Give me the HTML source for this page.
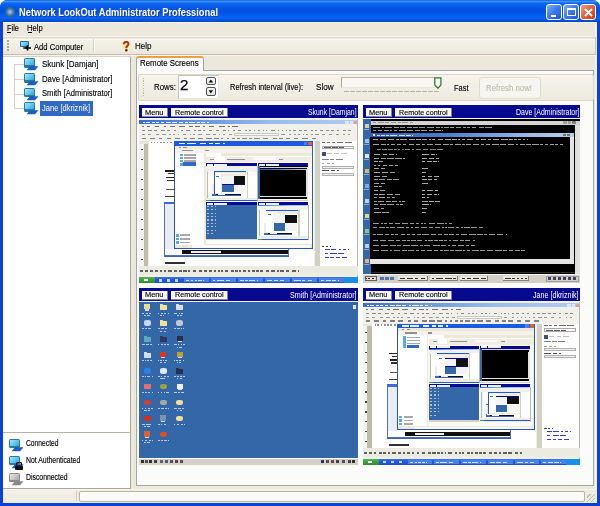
<!DOCTYPE html>
<html><head><meta charset="utf-8"><style>
*{margin:0;padding:0;box-sizing:border-box}
html,body{width:600px;height:506px;overflow:hidden;background:#ffffff}
body{font-family:"Liberation Sans",sans-serif;font-size:8px;color:#000;position:relative}
div,span,svg{position:absolute}
.t{white-space:nowrap;line-height:1;transform-origin:0 0}
</style></head><body>
<div style="left:0px;top:0px;width:600px;height:506px;background:#0842d8;border-radius:8px 8px 0 0"></div>
<div style="left:0px;top:0px;width:600px;height:22px;background:linear-gradient(#1060e0 0px,#3a94ff 1.5px,#1068f0 3px,#0558e8 7px,#0050e0 12px,#0860f2 16px,#0a64f4 18px,#0452d8 20.5px,#0040c0 22px);border-radius:7px 7px 0 0"></div>
<div style="left:5px;top:6.5px;width:10px;height:10px;border-radius:5px;background:radial-gradient(circle at 50% 50%,#b0d0ff 0,#7090d8 30%,#2a6a78 60%,#508a40 80%,#c0d8a0 100%)"></div>
<div class="t" style="left:18.69px;top:7.58px;font-size:10.17px;color:#fff;font-weight:bold;transform:scaleX(0.915);text-shadow:1px 1px 0 #1a3aa0">Network LookOut Administrator Professional</div>
<div style="left:546px;top:4px;width:16px;height:16px;border:1px solid #fff;border-radius:3px;background:linear-gradient(135deg,#7eb0ff,#3a78f0 50%,#1c55d8)"><div style="left:4px;top:10px;width:5px;height:2px;background:#fff"></div></div>
<div style="left:563px;top:4px;width:16px;height:16px;border:1px solid #fff;border-radius:3px;background:linear-gradient(135deg,#7eb0ff,#3a78f0 50%,#1c55d8)"><div style="left:3px;top:3px;width:9px;height:8px;border:1px solid #fff;border-top-width:2px"></div></div>
<div style="left:580px;top:4px;width:16px;height:16px;border:1px solid #fff;border-radius:3px;background:linear-gradient(135deg,#f0a080,#e06040 50%,#c0401a)"><svg style="left:3px;top:3px" width="9" height="9"><path d="M1 1L8 8M8 1L1 8" stroke="#fff" stroke-width="1.8"/></svg></div>
<div style="left:3px;top:22px;width:594px;height:481px;background:#ede8dc;"></div>
<div style="left:3px;top:22px;width:594px;height:1px;background:#f4f6e8;"></div>
<div style="left:595px;top:22px;width:1.5px;height:480px;background:#f4f3ee;"></div>
<div class="t" style="left:6.73px;top:24.22px;font-size:9.30px;color:#000;font-weight:normal;transform:scaleX(0.801);-webkit-text-stroke:0.15px #000;">File</div>
<div style="left:7.2px;top:32.3px;width:3.5px;height:0.8px;background:#000;"></div>
<div class="t" style="left:27.33px;top:24.22px;font-size:9.30px;color:#000;font-weight:normal;transform:scaleX(0.816);-webkit-text-stroke:0.15px #000;">Help</div>
<div style="left:27.8px;top:32.3px;width:4.5px;height:0.8px;background:#000;"></div>
<div style="left:3px;top:35.5px;width:593px;height:1px;background:#f6f4ec;"></div>
<div style="left:3px;top:36.8px;width:593px;height:1.2px;background:#dedacc;"></div>
<div style="left:3px;top:38.6px;width:592px;height:1px;background:#fbfaf4;"></div>
<div style="left:3px;top:39.5px;width:592px;height:14.5px;background:linear-gradient(#f3f2e6,#f0eee2 50%,#ebe6dc);"></div>
<div style="left:594.5px;top:37px;width:1px;height:17px;background:#c8c4b4;"></div>
<div style="left:3px;top:54px;width:593px;height:1px;background:#c4bcb0;"></div>
<div style="left:3px;top:55px;width:593px;height:1px;background:#f8f4ec;"></div>
<div style="left:7px;top:40px;width:2px;height:12px;background:repeating-linear-gradient(#b0ac98 0 1.5px,transparent 1.5px 3px);"></div>
<div style="left:20.3px;top:41px;width:8.4px;height:6px;background:#2a6a88;border-radius:1px"></div>
<div style="left:21.4px;top:42px;width:6.2px;height:4px;background:linear-gradient(135deg,#a8e8ff,#30b0e8);"></div>
<div style="left:22.5px;top:47px;width:4px;height:1.6px;background:#5a8aa0;"></div>
<svg style="left:23.8px;top:45.3px" width="7.5" height="6"><path d="M3.5 0.3V5.6M0.5 3H7.2" stroke="#000" stroke-width="1.7"/></svg>
<div class="t" style="left:34.23px;top:42.72px;font-size:9.30px;color:#000;font-weight:normal;transform:scaleX(0.821);-webkit-text-stroke:0.15px #000;">Add Computer</div>
<div style="left:92.5px;top:39px;width:1px;height:13px;background:#d8d4c0;"></div>
<div style="left:93.5px;top:39px;width:1px;height:13px;background:#ffffff;"></div>
<div style="left:120px;top:40px;width:11px;height:12px;border-radius:6px;background:radial-gradient(circle,rgba(255,230,120,.8) 0,rgba(255,240,180,.4) 50%,transparent 70%)"></div>
<svg style="left:122px;top:41px" width="8" height="11"><path d="M1.8 3.2C1.8 1.5 3 0.9 4.2 0.9C5.6 0.9 6.5 1.8 6.5 3C6.5 4.6 4.4 4.8 4.3 6.6V7.2" stroke="#b83008" stroke-width="2" fill="none"/><circle cx="4.3" cy="9.3" r="1.2" fill="#502000"/></svg>
<div class="t" style="left:134.53px;top:42.42px;font-size:9.30px;color:#000;font-weight:normal;transform:scaleX(0.860);-webkit-text-stroke:0.15px #000;">Help</div>
<div style="left:3px;top:56px;width:128px;height:432px;background:#fff;"></div>
<div style="left:130px;top:56px;width:1px;height:432px;background:#aca899;"></div>
<div style="left:3px;top:56px;width:128px;height:1px;background:#d8d4c4;"></div>
<div style="left:3px;top:432px;width:128px;height:1px;background:#b8b4a4;"></div>
<div style="left:3px;top:488px;width:128px;height:1px;background:#aca899;"></div>
<div style="left:14px;top:64px;width:1px;height:45px;background:#d8cccc;"></div>
<div style="left:14px;top:64px;width:10px;height:1px;background:#d8cccc;"></div>
<div style="left:24.2px;top:58px;width:11px;height:9.5px;background:#2a7a98;border-radius:1.5px"></div>
<div style="left:25.4px;top:59px;width:8.6px;height:6px;background:linear-gradient(135deg,#a0eaff,#30a8e0)"></div>
<svg style="left:26.2px;top:66px" width="13" height="5"><path d="M4 0.3H12.5L9 4.3H0.5Z" fill="#1a5cc8"/></svg>
<div class="t" style="left:41.51px;top:58.53px;font-size:9.88px;color:#000;font-weight:normal;transform:scaleX(0.811);-webkit-text-stroke:0.15px #000;">Skunk [Damjan]</div>
<div style="left:14px;top:79px;width:10px;height:1px;background:#d8cccc;"></div>
<div style="left:24.2px;top:73px;width:11px;height:9.5px;background:#2a7a98;border-radius:1.5px"></div>
<div style="left:25.4px;top:74px;width:8.6px;height:6px;background:linear-gradient(135deg,#a0eaff,#30a8e0)"></div>
<svg style="left:26.2px;top:81px" width="13" height="5"><path d="M4 0.3H12.5L9 4.3H0.5Z" fill="#1a5cc8"/></svg>
<div class="t" style="left:41.51px;top:73.53px;font-size:9.88px;color:#000;font-weight:normal;transform:scaleX(0.788);-webkit-text-stroke:0.15px #000;">Dave [Administrator]</div>
<div style="left:14px;top:93.5px;width:10px;height:1px;background:#d8cccc;"></div>
<div style="left:24.2px;top:87.5px;width:11px;height:9.5px;background:#2a7a98;border-radius:1.5px"></div>
<div style="left:25.4px;top:88.5px;width:8.6px;height:6px;background:linear-gradient(135deg,#a0eaff,#30a8e0)"></div>
<svg style="left:26.2px;top:95.5px" width="13" height="5"><path d="M4 0.3H12.5L9 4.3H0.5Z" fill="#1a5cc8"/></svg>
<div class="t" style="left:41.51px;top:88.03px;font-size:9.88px;color:#000;font-weight:normal;transform:scaleX(0.769);-webkit-text-stroke:0.15px #000;">Smith [Administrator]</div>
<div style="left:14px;top:108px;width:10px;height:1px;background:#d8cccc;"></div>
<div style="left:24.2px;top:102px;width:11px;height:9.5px;background:#2a7a98;border-radius:1.5px"></div>
<div style="left:25.4px;top:103px;width:8.6px;height:6px;background:linear-gradient(135deg,#a0eaff,#30a8e0)"></div>
<svg style="left:26.2px;top:110px" width="13" height="5"><path d="M4 0.3H12.5L9 4.3H0.5Z" fill="#1a5cc8"/></svg>
<div style="left:40.4px;top:101.3px;width:52.2px;height:14.5px;background:#316ac5;"></div>
<div class="t" style="left:41.51px;top:103.33px;font-size:9.88px;color:#fff;font-weight:normal;transform:scaleX(0.762);">Jane [dkriznik]</div>
<div style="left:9.2px;top:438.5px;width:11px;height:9.5px;background:#2a7a98;border-radius:1.5px"></div>
<div style="left:10.399999999999999px;top:439.5px;width:8.6px;height:6px;background:linear-gradient(135deg,#a0eaff,#30a8e0)"></div>
<svg style="left:11.2px;top:446.5px" width="13" height="5"><path d="M4 0.3H12.5L9 4.3H0.5Z" fill="#1a5cc8"/></svg>
<div class="t" style="left:26.37px;top:438.74px;font-size:8.58px;color:#000;font-weight:normal;transform:scaleX(0.783);-webkit-text-stroke:0.15px #000;">Connected</div>
<div style="left:9.2px;top:455.5px;width:11px;height:9.5px;background:#2a7a98;border-radius:1.5px"></div>
<div style="left:10.399999999999999px;top:456.5px;width:8.6px;height:6px;background:linear-gradient(135deg,#a0eaff,#30a8e0)"></div>
<svg style="left:11.2px;top:463.5px" width="13" height="5"><path d="M4 0.3H12.5L9 4.3H0.5Z" fill="#1a5cc8"/></svg>
<svg style="left:14.2px;top:461.5px" width="10" height="8"><path d="M2.5 3.5V2.2A2.5 2 0 0 1 7.5 2.2V3.5" stroke="#000" stroke-width="1.2" fill="none"/><rect x="1" y="3.5" width="8" height="4.5" rx="1" fill="#101010"/></svg>
<div class="t" style="left:26.37px;top:455.94px;font-size:8.58px;color:#000;font-weight:normal;transform:scaleX(0.801);-webkit-text-stroke:0.15px #000;">Not Authenticated</div>
<div style="left:9.2px;top:472.5px;width:11px;height:9.5px;background:#888888;border-radius:1.5px"></div>
<div style="left:10.399999999999999px;top:473.5px;width:8.6px;height:6px;background:linear-gradient(135deg,#e8e8e8,#a8a8a8)"></div>
<svg style="left:11.2px;top:480.5px" width="13" height="5"><path d="M4 0.3H12.5L9 4.3H0.5Z" fill="#888888"/></svg>
<div class="t" style="left:26.37px;top:473.24px;font-size:8.58px;color:#000;font-weight:normal;transform:scaleX(0.799);-webkit-text-stroke:0.15px #000;">Disconnected</div>
<div style="left:3px;top:489px;width:593px;height:14px;background:#eeebe0;"></div>
<div style="left:3px;top:489px;width:593px;height:1px;background:#f8f6ee;"></div>
<div style="left:4px;top:490px;width:72px;height:12px;background:linear-gradient(#f2f0e8,#eeece0);"></div>
<div style="left:76px;top:491px;width:1px;height:10px;background:#d0ccb8;"></div>
<div style="left:79px;top:491px;width:506px;height:11px;background:#fbfaf6;border:1px solid #b9b5a2;border-radius:2px"></div>
<div style="left:587px;top:494px;width:8px;height:8px;background:repeating-linear-gradient(135deg,transparent 0 2px,#c0bca8 2px 3px);"></div>
<div style="left:135.8px;top:70px;width:458.5px;height:416px;background:#fbfbf9;border:1px solid #a0a8a8"></div>
<div style="left:135.8px;top:56px;width:68.5px;height:15px;background:#fcfcfe;border:1px solid #a0a8a8;border-bottom:none;border-top:2px solid #eaa040;border-radius:3px 3px 0 0"></div>
<div class="t" style="left:140.31px;top:57.55px;font-size:9.74px;color:#000;font-weight:normal;transform:scaleX(0.809);-webkit-text-stroke:0.15px #000;">Remote Screens</div>
<div style="left:137.8px;top:73.8px;width:456.5px;height:27px;background:linear-gradient(#f6f4ec,#edeadf);border:1px solid #dcd8c8;border-radius:2px"></div>
<div style="left:142.5px;top:77.5px;width:1.5px;height:19px;background:repeating-linear-gradient(#b8b4a0 0 1.2px,transparent 1.2px 2.4px);"></div>
<div class="t" style="left:153.51px;top:82.03px;font-size:9.88px;color:#000;font-weight:normal;transform:scaleX(0.799);-webkit-text-stroke:0.15px #000;">Rows:</div>
<div style="left:178px;top:74.5px;width:40.5px;height:24.7px;background:#fff;border:1px solid #c8c4b8;border-right-color:#e8e6e0;border-bottom-color:#e8e6e0"></div>
<div class="t" style="left:180.00px;top:78.78px;font-size:13.95px;color:#000;font-weight:normal;transform:scaleX(1.085);-webkit-text-stroke:0.25px #000">2</div>
<div style="left:206.3px;top:77.3px;width:9.7px;height:7.8px;background:linear-gradient(#f8f8f8,#e4e6ea);border:1.3px solid #485048;border-radius:2px"></div>
<svg style="left:206.3px;top:77.3px" width="10" height="8.8"><path d="M2.6 5.500000000000005L4.85 2.5000000000000058L7.1 5.500000000000005Z" fill="#000"/></svg>
<div style="left:206.3px;top:86.7px;width:9.7px;height:9.7px;background:linear-gradient(#f8f8f8,#e4e6ea);border:1.3px solid #485048;border-radius:2px"></div>
<svg style="left:206.3px;top:86.7px" width="10" height="10.7"><path d="M2.6 3.2499999999999942L4.85 6.449999999999994L7.1 3.2499999999999942Z" fill="#000"/></svg>
<div class="t" style="left:230.12px;top:82.37px;font-size:9.59px;color:#000;font-weight:normal;transform:scaleX(0.784);-webkit-text-stroke:0.15px #000;">Refresh interval (live):</div>
<div class="t" style="left:315.52px;top:82.37px;font-size:9.59px;color:#000;font-weight:normal;transform:scaleX(0.850);-webkit-text-stroke:0.15px #000;">Slow</div>
<div style="left:341px;top:76.5px;width:100px;height:11.5px;background:#faf7f4;border-left:1.2px solid #a8a898;border-top:1.2px solid #b8b8a8;border-right:0.6px solid #e8e6dc;border-bottom:0.6px solid #e8e6dc;border-radius:1px"></div>
<div style="left:344px;top:91.3px;width:96px;height:1.2px;background:repeating-linear-gradient(90deg,#b4b2a2 0 5px,transparent 5px 6px);"></div>
<svg style="left:434px;top:77px" width="8" height="12"><path d="M0.8 0.8H6.9V8L3.9 11.2L0.8 8Z" fill="#fafaf6" stroke="#387838" stroke-width="1.3"/></svg>
<div class="t" style="left:454.31px;top:82.53px;font-size:9.88px;color:#000;font-weight:normal;transform:scaleX(0.760);-webkit-text-stroke:0.15px #000;">Fast</div>
<div style="left:478.6px;top:76.5px;width:62px;height:22px;background:#f6f5f0;border:1px solid #e0dccc;border-radius:3px"></div>
<div class="t" style="left:486.41px;top:83.03px;font-size:9.88px;color:#b4b2a4;font-weight:normal;transform:scaleX(0.791);">Refresh now!</div>
<div style="left:139px;top:105.3px;width:219px;height:13px;background:#07098e;"></div>
<div style="left:141.8px;top:107.89999999999999px;width:25.9px;height:9.6px;background:#f8f8fa;border-right:1px solid #8080a0;border-bottom:1px solid #8080a0"></div>
<div class="t" style="left:145.31px;top:108.55px;font-size:7.85px;color:#000;font-weight:normal;transform:scaleX(0.939);-webkit-text-stroke:0.15px #000">Menu</div>
<div style="left:171px;top:107.89999999999999px;width:56.7px;height:9.6px;background:#f8f8fa;border-right:1px solid #8080a0;border-bottom:1px solid #8080a0"></div>
<div class="t" style="left:175.11px;top:108.55px;font-size:7.85px;color:#000;font-weight:normal;transform:scaleX(0.915);-webkit-text-stroke:0.15px #000">Remote control</div>
<div class="t" style="left:308.18px;top:108.26px;font-size:8.43px;color:#fff;font-weight:normal;transform:scaleX(0.817);">Skunk [Damjan]</div>
<div style="left:139px;top:118.3px;width:219px;height:1px;background:#f8f8fc;"></div>
<div style="left:363px;top:105.3px;width:217px;height:13px;background:#07098e;"></div>
<div style="left:365.8px;top:107.89999999999999px;width:25.9px;height:9.6px;background:#f8f8fa;border-right:1px solid #8080a0;border-bottom:1px solid #8080a0"></div>
<div class="t" style="left:369.31px;top:108.55px;font-size:7.85px;color:#000;font-weight:normal;transform:scaleX(0.939);-webkit-text-stroke:0.15px #000">Menu</div>
<div style="left:395px;top:107.89999999999999px;width:56.7px;height:9.6px;background:#f8f8fa;border-right:1px solid #8080a0;border-bottom:1px solid #8080a0"></div>
<div class="t" style="left:399.11px;top:108.55px;font-size:7.85px;color:#000;font-weight:normal;transform:scaleX(0.915);-webkit-text-stroke:0.15px #000">Remote control</div>
<div class="t" style="left:515.58px;top:108.26px;font-size:8.43px;color:#fff;font-weight:normal;transform:scaleX(0.833);">Dave [Administrator]</div>
<div style="left:363px;top:118.3px;width:217px;height:1px;background:#f8f8fc;"></div>
<div style="left:139px;top:288.2px;width:219px;height:13px;background:#07098e;"></div>
<div style="left:141.8px;top:290.8px;width:25.9px;height:9.6px;background:#f8f8fa;border-right:1px solid #8080a0;border-bottom:1px solid #8080a0"></div>
<div class="t" style="left:145.31px;top:291.45px;font-size:7.85px;color:#000;font-weight:normal;transform:scaleX(0.939);-webkit-text-stroke:0.15px #000">Menu</div>
<div style="left:171px;top:290.8px;width:56.7px;height:9.6px;background:#f8f8fa;border-right:1px solid #8080a0;border-bottom:1px solid #8080a0"></div>
<div class="t" style="left:175.11px;top:291.45px;font-size:7.85px;color:#000;font-weight:normal;transform:scaleX(0.915);-webkit-text-stroke:0.15px #000">Remote control</div>
<div class="t" style="left:289.58px;top:291.16px;font-size:8.43px;color:#fff;font-weight:normal;transform:scaleX(0.852);">Smith [Administrator]</div>
<div style="left:139px;top:301.2px;width:219px;height:1px;background:#f8f8fc;"></div>
<div style="left:363px;top:288.2px;width:217px;height:13px;background:#07098e;"></div>
<div style="left:365.8px;top:290.8px;width:25.9px;height:9.6px;background:#f8f8fa;border-right:1px solid #8080a0;border-bottom:1px solid #8080a0"></div>
<div class="t" style="left:369.31px;top:291.45px;font-size:7.85px;color:#000;font-weight:normal;transform:scaleX(0.939);-webkit-text-stroke:0.15px #000">Menu</div>
<div style="left:395px;top:290.8px;width:56.7px;height:9.6px;background:#f8f8fa;border-right:1px solid #8080a0;border-bottom:1px solid #8080a0"></div>
<div class="t" style="left:399.11px;top:291.45px;font-size:7.85px;color:#000;font-weight:normal;transform:scaleX(0.915);-webkit-text-stroke:0.15px #000">Remote control</div>
<div class="t" style="left:533.08px;top:291.16px;font-size:8.43px;color:#fff;font-weight:normal;transform:scaleX(0.847);">Jane [dkriznik]</div>
<div style="left:363px;top:301.2px;width:217px;height:1px;background:#f8f8fc;"></div>
<div style="left:0;top:0;width:600px;height:506px;filter:blur(0.35px)">
<div style="left:139.00px;top:119.00px;width:219.00px;height:164.00px;background:#f0efe8;"></div>
<div style="left:139.00px;top:120.20px;width:219.00px;height:4.00px;background:linear-gradient(90deg,#3a6cd0,#6a98e0 30%,#98bcec 60%,#b0ccf0);"></div>
<div style="left:139.00px;top:124.20px;width:219.00px;height:16.50px;background:#f1f0ea;"></div>
<div style="left:143.00px;top:121.60px;width:2.06px;height:1.00px;background:#f0f4ff;"></div>
<div style="left:146.18px;top:121.60px;width:3.96px;height:1.00px;background:#f0f4ff;"></div>
<div style="left:152.09px;top:121.60px;width:2.69px;height:1.00px;background:#f0f4ff;"></div>
<div style="left:155.91px;top:121.60px;width:3.16px;height:1.00px;background:#f0f4ff;"></div>
<div style="left:161.12px;top:121.60px;width:2.74px;height:1.00px;background:#f0f4ff;"></div>
<div style="left:165.88px;top:121.60px;width:5.31px;height:1.00px;background:#f0f4ff;"></div>
<div style="left:172.35px;top:121.60px;width:4.68px;height:1.00px;background:#f0f4ff;"></div>
<div style="left:178.63px;top:121.60px;width:4.06px;height:1.00px;background:#f0f4ff;"></div>
<div style="left:185.09px;top:121.60px;width:2.47px;height:1.00px;background:#f0f4ff;"></div>
<div style="left:188.54px;top:121.60px;width:6.70px;height:1.00px;background:#f0f4ff;"></div>
<div style="left:196.78px;top:121.60px;width:2.99px;height:1.00px;background:#f0f4ff;"></div>
<div style="left:201.21px;top:121.60px;width:3.82px;height:1.00px;background:#f0f4ff;"></div>
<div style="left:207.37px;top:121.60px;width:1.63px;height:1.00px;background:#f0f4ff;"></div>
<div style="left:345.00px;top:120.80px;width:3.50px;height:3.00px;background:#d8e8ff;"></div>
<div style="left:349.50px;top:120.80px;width:3.50px;height:3.00px;background:#d8e8ff;"></div>
<div style="left:353.50px;top:120.80px;width:3.50px;height:3.00px;background:#e8a090;"></div>
<div style="left:142.00px;top:125.60px;width:2.31px;height:1.00px;background:#707070;"></div>
<div style="left:147.08px;top:125.60px;width:3.21px;height:1.00px;background:#707070;"></div>
<div style="left:155.23px;top:125.60px;width:3.99px;height:1.00px;background:#707070;"></div>
<div style="left:163.58px;top:125.60px;width:2.40px;height:1.00px;background:#707070;"></div>
<div style="left:169.69px;top:125.60px;width:5.37px;height:1.00px;background:#707070;"></div>
<div style="left:178.81px;top:125.60px;width:5.78px;height:1.00px;background:#707070;"></div>
<div style="left:189.46px;top:125.60px;width:3.48px;height:1.00px;background:#707070;"></div>
<div style="left:195.05px;top:125.60px;width:5.02px;height:1.00px;background:#707070;"></div>
<div style="left:202.57px;top:125.60px;width:2.04px;height:1.00px;background:#707070;"></div>
<div style="left:209.01px;top:125.60px;width:5.37px;height:1.00px;background:#707070;"></div>
<div style="left:219.12px;top:125.60px;width:5.81px;height:1.00px;background:#707070;"></div>
<div style="left:227.66px;top:125.60px;width:2.33px;height:1.00px;background:#707070;"></div>
<div style="left:232.47px;top:125.60px;width:5.91px;height:1.00px;background:#707070;"></div>
<div style="left:142.00px;top:129.60px;width:2.71px;height:1.80px;background:#8a8a8a;"></div>
<div style="left:148.22px;top:129.60px;width:3.45px;height:1.80px;background:#8a8a8a;"></div>
<div style="left:154.22px;top:129.60px;width:2.96px;height:1.80px;background:#8a8a8a;"></div>
<div style="left:161.38px;top:129.60px;width:3.73px;height:1.80px;background:#8a8a8a;"></div>
<div style="left:167.41px;top:129.60px;width:2.96px;height:1.80px;background:#8a8a8a;"></div>
<div style="left:173.83px;top:129.60px;width:2.51px;height:1.80px;background:#8a8a8a;"></div>
<div style="left:180.75px;top:129.60px;width:2.58px;height:1.80px;background:#8a8a8a;"></div>
<div style="left:186.34px;top:129.60px;width:3.83px;height:1.80px;background:#8a8a8a;"></div>
<div style="left:193.68px;top:129.60px;width:1.90px;height:1.80px;background:#8a8a8a;"></div>
<div style="left:198.22px;top:129.60px;width:2.49px;height:1.80px;background:#8a8a8a;"></div>
<div style="left:202.65px;top:129.60px;width:2.82px;height:1.80px;background:#8a8a8a;"></div>
<div style="left:209.26px;top:129.60px;width:2.28px;height:1.80px;background:#8a8a8a;"></div>
<div style="left:215.63px;top:129.60px;width:3.78px;height:1.80px;background:#8a8a8a;"></div>
<div style="left:222.71px;top:129.60px;width:3.04px;height:1.80px;background:#8a8a8a;"></div>
<div style="left:227.87px;top:129.60px;width:1.17px;height:1.80px;background:#8a8a8a;"></div>
<div style="left:233.48px;top:129.60px;width:1.85px;height:1.80px;background:#8a8a8a;"></div>
<div style="left:237.71px;top:129.60px;width:3.69px;height:1.80px;background:#8a8a8a;"></div>
<div style="left:245.23px;top:129.60px;width:1.37px;height:1.80px;background:#8a8a8a;"></div>
<div style="left:249.27px;top:129.60px;width:1.73px;height:1.80px;background:#8a8a8a;"></div>
<div style="left:253.53px;top:129.60px;width:1.02px;height:1.80px;background:#8a8a8a;"></div>
<div style="left:257.77px;top:129.60px;width:1.91px;height:1.80px;background:#8a8a8a;"></div>
<div style="left:262.54px;top:129.60px;width:1.56px;height:1.80px;background:#8a8a8a;"></div>
<div style="left:266.20px;top:129.60px;width:1.10px;height:1.80px;background:#8a8a8a;"></div>
<div style="left:271.45px;top:129.60px;width:3.24px;height:1.80px;background:#8a8a8a;"></div>
<div style="left:278.01px;top:129.60px;width:1.37px;height:1.80px;background:#8a8a8a;"></div>
<div style="left:281.58px;top:129.60px;width:1.36px;height:1.80px;background:#8a8a8a;"></div>
<div style="left:285.59px;top:129.60px;width:1.17px;height:1.80px;background:#8a8a8a;"></div>
<div style="left:289.31px;top:129.60px;width:1.61px;height:1.80px;background:#8a8a8a;"></div>
<div style="left:293.24px;top:129.60px;width:2.96px;height:1.80px;background:#8a8a8a;"></div>
<div style="left:299.24px;top:129.60px;width:2.42px;height:1.80px;background:#8a8a8a;"></div>
<div style="left:304.42px;top:129.60px;width:2.62px;height:1.80px;background:#8a8a8a;"></div>
<div style="left:310.96px;top:129.60px;width:1.92px;height:1.80px;background:#8a8a8a;"></div>
<div style="left:314.87px;top:129.60px;width:2.44px;height:1.80px;background:#8a8a8a;"></div>
<div style="left:320.14px;top:129.60px;width:3.34px;height:1.80px;background:#8a8a8a;"></div>
<div style="left:325.58px;top:129.60px;width:3.62px;height:1.80px;background:#8a8a8a;"></div>
<div style="left:331.04px;top:129.60px;width:2.63px;height:1.80px;background:#8a8a8a;"></div>
<div style="left:336.67px;top:129.60px;width:1.95px;height:1.80px;background:#8a8a8a;"></div>
<div style="left:342.81px;top:129.60px;width:3.11px;height:1.80px;background:#8a8a8a;"></div>
<div style="left:348.16px;top:129.60px;width:2.48px;height:1.80px;background:#8a8a8a;"></div>
<div style="left:142.00px;top:133.60px;width:2.59px;height:1.80px;background:#989898;"></div>
<div style="left:147.97px;top:133.60px;width:3.53px;height:1.80px;background:#989898;"></div>
<div style="left:155.72px;top:133.60px;width:3.65px;height:1.80px;background:#989898;"></div>
<div style="left:162.16px;top:133.60px;width:3.85px;height:1.80px;background:#989898;"></div>
<div style="left:168.95px;top:133.60px;width:1.92px;height:1.80px;background:#989898;"></div>
<div style="left:172.92px;top:133.60px;width:2.54px;height:1.80px;background:#989898;"></div>
<div style="left:177.67px;top:133.60px;width:1.82px;height:1.80px;background:#989898;"></div>
<div style="left:182.95px;top:133.60px;width:3.33px;height:1.80px;background:#989898;"></div>
<div style="left:190.11px;top:133.60px;width:1.26px;height:1.80px;background:#989898;"></div>
<div style="left:193.33px;top:133.60px;width:1.77px;height:1.80px;background:#989898;"></div>
<div style="left:198.39px;top:133.60px;width:3.52px;height:1.80px;background:#989898;"></div>
<div style="left:205.87px;top:133.60px;width:3.80px;height:1.80px;background:#989898;"></div>
<div style="left:213.06px;top:133.60px;width:2.91px;height:1.80px;background:#989898;"></div>
<div style="left:218.55px;top:133.60px;width:1.94px;height:1.80px;background:#989898;"></div>
<div style="left:222.85px;top:133.60px;width:2.61px;height:1.80px;background:#989898;"></div>
<div style="left:228.90px;top:133.60px;width:2.72px;height:1.80px;background:#989898;"></div>
<div style="left:234.48px;top:133.60px;width:2.27px;height:1.80px;background:#989898;"></div>
<div style="left:239.22px;top:133.60px;width:3.45px;height:1.80px;background:#989898;"></div>
<div style="left:246.03px;top:133.60px;width:3.25px;height:1.80px;background:#989898;"></div>
<div style="left:253.27px;top:133.60px;width:1.84px;height:1.80px;background:#989898;"></div>
<div style="left:257.23px;top:133.60px;width:1.85px;height:1.80px;background:#989898;"></div>
<div style="left:263.33px;top:133.60px;width:3.37px;height:1.80px;background:#989898;"></div>
<div style="left:269.60px;top:133.60px;width:3.33px;height:1.80px;background:#989898;"></div>
<div style="left:275.65px;top:133.60px;width:3.60px;height:1.80px;background:#989898;"></div>
<div style="left:281.29px;top:133.60px;width:3.22px;height:1.80px;background:#989898;"></div>
<div style="left:288.96px;top:133.60px;width:2.26px;height:1.80px;background:#989898;"></div>
<div style="left:294.27px;top:133.60px;width:1.39px;height:1.80px;background:#989898;"></div>
<div style="left:298.20px;top:133.60px;width:1.70px;height:1.80px;background:#989898;"></div>
<div style="left:302.50px;top:133.60px;width:1.21px;height:1.80px;background:#989898;"></div>
<div style="left:306.32px;top:133.60px;width:1.31px;height:1.80px;background:#989898;"></div>
<div style="left:310.85px;top:133.60px;width:2.22px;height:1.80px;background:#989898;"></div>
<div style="left:315.48px;top:133.60px;width:3.83px;height:1.80px;background:#989898;"></div>
<div style="left:321.95px;top:133.60px;width:2.59px;height:1.80px;background:#989898;"></div>
<div style="left:328.76px;top:133.60px;width:3.28px;height:1.80px;background:#989898;"></div>
<div style="left:336.44px;top:133.60px;width:2.83px;height:1.80px;background:#989898;"></div>
<div style="left:343.42px;top:133.60px;width:1.20px;height:1.80px;background:#989898;"></div>
<div style="left:348.39px;top:133.60px;width:2.01px;height:1.80px;background:#989898;"></div>
<div style="left:142.00px;top:137.60px;width:4.19px;height:1.20px;background:#808080;"></div>
<div style="left:150.02px;top:137.60px;width:4.99px;height:1.20px;background:#808080;"></div>
<div style="left:159.15px;top:137.60px;width:3.14px;height:1.20px;background:#808080;"></div>
<div style="left:166.70px;top:137.60px;width:4.27px;height:1.20px;background:#808080;"></div>
<div style="left:174.78px;top:137.60px;width:5.02px;height:1.20px;background:#808080;"></div>
<div style="left:184.11px;top:137.60px;width:3.10px;height:1.20px;background:#808080;"></div>
<div style="left:190.00px;top:137.60px;width:4.87px;height:1.20px;background:#808080;"></div>
<div style="left:198.25px;top:137.60px;width:5.00px;height:1.20px;background:#808080;"></div>
<div style="left:206.03px;top:137.60px;width:5.82px;height:1.20px;background:#808080;"></div>
<div style="left:213.68px;top:137.60px;width:4.89px;height:1.20px;background:#808080;"></div>
<div style="left:221.38px;top:137.60px;width:2.10px;height:1.20px;background:#808080;"></div>
<div style="left:227.10px;top:137.60px;width:2.21px;height:1.20px;background:#808080;"></div>
<div style="left:231.74px;top:137.60px;width:3.30px;height:1.20px;background:#808080;"></div>
<div style="left:237.27px;top:137.60px;width:2.66px;height:1.20px;background:#808080;"></div>
<div style="left:241.92px;top:137.60px;width:5.38px;height:1.20px;background:#808080;"></div>
<div style="left:249.33px;top:137.60px;width:2.64px;height:1.20px;background:#808080;"></div>
<div style="left:253.98px;top:137.60px;width:5.64px;height:1.20px;background:#808080;"></div>
<div style="left:262.89px;top:137.60px;width:5.29px;height:1.20px;background:#808080;"></div>
<div style="left:272.61px;top:137.60px;width:3.98px;height:1.20px;background:#808080;"></div>
<div style="left:279.46px;top:137.60px;width:3.56px;height:1.20px;background:#808080;"></div>
<div style="left:285.53px;top:137.60px;width:4.38px;height:1.20px;background:#808080;"></div>
<div style="left:294.32px;top:137.60px;width:4.01px;height:1.20px;background:#808080;"></div>
<div style="left:302.17px;top:137.60px;width:5.56px;height:1.20px;background:#808080;"></div>
<div style="left:311.77px;top:137.60px;width:4.68px;height:1.20px;background:#808080;"></div>
<div style="left:234.00px;top:133.30px;width:45.00px;height:3.20px;background:#fbfbfb;border:0.5px solid #c8c8c8"></div>
<div style="left:148.50px;top:140.80px;width:165.50px;height:2.80px;background:#ffffff;"></div>
<div style="left:139.00px;top:140.80px;width:9.50px;height:2.80px;background:#e8e6dc;"></div>
<div style="left:151.00px;top:141.60px;width:1.38px;height:1.20px;background:#909090;"></div>
<div style="left:153.59px;top:141.60px;width:1.17px;height:1.20px;background:#909090;"></div>
<div style="left:156.89px;top:141.60px;width:1.58px;height:1.20px;background:#909090;"></div>
<div style="left:160.30px;top:141.60px;width:1.55px;height:1.20px;background:#909090;"></div>
<div style="left:163.27px;top:141.60px;width:1.73px;height:1.20px;background:#909090;"></div>
<div style="left:166.68px;top:141.60px;width:1.78px;height:1.20px;background:#909090;"></div>
<div style="left:170.26px;top:141.60px;width:1.84px;height:1.20px;background:#909090;"></div>
<div style="left:173.59px;top:141.60px;width:1.16px;height:1.20px;background:#909090;"></div>
<div style="left:175.85px;top:141.60px;width:1.72px;height:1.20px;background:#909090;"></div>
<div style="left:139.00px;top:143.60px;width:5.00px;height:124.40px;background:#f4f3ee;"></div>
<div style="left:143.50px;top:143.60px;width:4.50px;height:122.40px;background:#bcbca8;"></div>
<div style="left:148.50px;top:143.60px;width:165.50px;height:122.40px;background:#ffffff;"></div>
<div style="left:314.50px;top:140.80px;width:5.00px;height:125.20px;background:#d2d2c2;"></div>
<div style="left:319.50px;top:140.80px;width:37.00px;height:125.20px;background:#ffffff;"></div>
<div style="left:356.50px;top:119.00px;width:1.50px;height:164.00px;background:#b8b8b0;"></div>
<div style="left:141.30px;top:149.00px;width:1.50px;height:1.20px;background:#404040;"></div>
<div style="left:141.30px;top:159.00px;width:1.50px;height:1.20px;background:#404040;"></div>
<div style="left:141.30px;top:169.00px;width:1.50px;height:1.20px;background:#404040;"></div>
<div style="left:141.30px;top:179.00px;width:1.50px;height:1.20px;background:#404040;"></div>
<div style="left:141.30px;top:189.00px;width:1.50px;height:1.20px;background:#404040;"></div>
<div style="left:141.30px;top:199.00px;width:1.50px;height:1.20px;background:#404040;"></div>
<div style="left:141.30px;top:209.00px;width:1.50px;height:1.20px;background:#404040;"></div>
<div style="left:141.30px;top:219.00px;width:1.50px;height:1.20px;background:#404040;"></div>
<div style="left:141.30px;top:229.00px;width:1.50px;height:1.20px;background:#404040;"></div>
<div style="left:141.30px;top:239.00px;width:1.50px;height:1.20px;background:#404040;"></div>
<div style="left:141.30px;top:249.00px;width:1.50px;height:1.20px;background:#404040;"></div>
<div style="left:141.30px;top:259.00px;width:1.50px;height:1.20px;background:#404040;"></div>
<div style="left:322.00px;top:141.80px;width:3.22px;height:1.20px;background:#707070;"></div>
<div style="left:326.90px;top:141.80px;width:2.81px;height:1.20px;background:#707070;"></div>
<div style="left:331.85px;top:141.80px;width:3.16px;height:1.20px;background:#707070;"></div>
<div style="left:336.77px;top:141.80px;width:6.63px;height:1.20px;background:#707070;"></div>
<div style="left:344.93px;top:141.80px;width:6.84px;height:1.20px;background:#707070;"></div>
<div style="left:322.00px;top:145.50px;width:32.00px;height:3.50px;background:#ffffff;border:1px solid #a8a8a8"></div>
<div style="left:324.00px;top:146.80px;width:6.89px;height:1.00px;background:#606060;"></div>
<div style="left:331.93px;top:146.80px;width:5.63px;height:1.00px;background:#606060;"></div>
<div style="left:339.22px;top:146.80px;width:4.78px;height:1.00px;background:#606060;"></div>
<div style="left:322.00px;top:152.00px;width:4.00px;height:4.00px;background:#405070;"></div>
<div style="left:327.00px;top:153.00px;width:5.09px;height:1.20px;background:#c0c0c0;"></div>
<div style="left:334.33px;top:153.00px;width:4.28px;height:1.20px;background:#c0c0c0;"></div>
<div style="left:340.59px;top:153.00px;width:6.68px;height:1.20px;background:#c0c0c0;"></div>
<div style="left:322.00px;top:158.50px;width:6.57px;height:1.20px;background:#808080;"></div>
<div style="left:329.73px;top:158.50px;width:4.78px;height:1.20px;background:#808080;"></div>
<div style="left:336.16px;top:158.50px;width:6.79px;height:1.20px;background:#808080;"></div>
<div style="left:322.00px;top:163.00px;width:2.45px;height:1.20px;background:#a0a0a0;"></div>
<div style="left:326.78px;top:163.00px;width:2.75px;height:1.20px;background:#a0a0a0;"></div>
<div style="left:331.56px;top:163.00px;width:2.44px;height:1.20px;background:#a0a0a0;"></div>
<div style="left:322.00px;top:165.50px;width:32.00px;height:3.00px;background:#f0f0f0;border:1px solid #b0b0b0"></div>
<div style="left:322.00px;top:170.00px;width:6.83px;height:1.30px;background:#505050;"></div>
<div style="left:330.60px;top:170.00px;width:4.37px;height:1.30px;background:#505050;"></div>
<div style="left:336.68px;top:170.00px;width:2.32px;height:1.30px;background:#505050;"></div>
<div style="left:322.00px;top:172.50px;width:32.00px;height:3.00px;background:#f0f0f0;border:1px solid #b0b0b0"></div>
<div style="left:322.00px;top:245.50px;width:2.21px;height:1.20px;background:#404040;"></div>
<div style="left:326.02px;top:245.50px;width:2.10px;height:1.20px;background:#404040;"></div>
<div style="left:329.82px;top:245.50px;width:1.18px;height:1.20px;background:#404040;"></div>
<div style="left:325.00px;top:249.00px;width:4.90px;height:1.20px;background:#3040c0;"></div>
<div style="left:331.16px;top:249.00px;width:5.21px;height:1.20px;background:#3040c0;"></div>
<div style="left:338.69px;top:249.00px;width:2.21px;height:1.20px;background:#3040c0;"></div>
<div style="left:342.51px;top:249.00px;width:3.77px;height:1.20px;background:#3040c0;"></div>
<div style="left:347.65px;top:249.00px;width:1.35px;height:1.20px;background:#3040c0;"></div>
<div style="left:325.00px;top:253.00px;width:3.12px;height:1.20px;background:#3040c0;"></div>
<div style="left:330.42px;top:253.00px;width:6.73px;height:1.20px;background:#3040c0;"></div>
<div style="left:338.15px;top:253.00px;width:5.85px;height:1.20px;background:#3040c0;"></div>
<div style="left:325.00px;top:257.00px;width:3.54px;height:1.20px;background:#3040c0;"></div>
<div style="left:330.33px;top:257.00px;width:3.33px;height:1.20px;background:#3040c0;"></div>
<div style="left:335.78px;top:257.00px;width:4.34px;height:1.20px;background:#3040c0;"></div>
<div style="left:341.56px;top:257.00px;width:5.44px;height:1.20px;background:#3040c0;"></div>
<div style="left:165.00px;top:170.00px;width:9.00px;height:1.60px;background:#202020;"></div>
<div style="left:168.00px;top:173.00px;width:6.00px;height:1.40px;background:#303030;"></div>
<div style="left:166.00px;top:176.50px;width:8.00px;height:1.60px;background:#202020;"></div>
<div style="left:167.00px;top:179.50px;width:7.00px;height:1.40px;background:#303030;"></div>
<div style="left:166.00px;top:189.00px;width:8.00px;height:1.20px;background:#505050;"></div>
<div style="left:165.00px;top:196.00px;width:9.00px;height:1.40px;background:#404040;"></div>
<div style="left:165.00px;top:261.50px;width:20.00px;height:2.00px;background:#303030;"></div>
<div style="left:163.70px;top:202.00px;width:125.00px;height:54.00px;background:#ffffff;border:1px solid #5070b0"></div>
<div style="left:163.70px;top:202.00px;width:125.00px;height:2.20px;background:#3a6ad8;"></div>
<div style="left:164.70px;top:204.20px;width:10.00px;height:45.00px;background:#e8ecf4;"></div>
<div style="left:181.50px;top:250.00px;width:106.00px;height:4.00px;background:#101010;"></div>
<div style="left:191.00px;top:250.80px;width:30.00px;height:2.20px;background:#f0f0f0;"></div>
<div style="left:163.70px;top:255.50px;width:125.00px;height:1.20px;background:#3a60b8;"></div>
<div style="left:174.00px;top:141.00px;width:139.00px;height:107.50px;background:#2a54b8;"></div>
<div style="left:174.00px;top:141.00px;width:139.00px;height:4.67px;background:#1a5ae0;"></div>
<div style="left:178.63px;top:142.70px;width:6.84px;height:1.27px;background:#e8f0ff;"></div>
<div style="left:187.27px;top:142.70px;width:9.07px;height:1.27px;background:#e8f0ff;"></div>
<div style="left:199.65px;top:142.70px;width:6.18px;height:1.27px;background:#e8f0ff;"></div>
<div style="left:208.61px;top:142.70px;width:4.72px;height:1.27px;background:#e8f0ff;"></div>
<div style="left:215.18px;top:142.70px;width:5.15px;height:1.27px;background:#e8f0ff;"></div>
<div style="left:223.16px;top:142.70px;width:1.81px;height:1.27px;background:#e8f0ff;"></div>
<div style="left:303.73px;top:141.85px;width:3.71px;height:3.19px;background:#4a80f0;"></div>
<div style="left:308.37px;top:141.85px;width:3.71px;height:3.19px;background:#e06040;"></div>
<div style="left:174.93px;top:145.67px;width:137.15px;height:101.98px;background:#ece9d8;"></div>
<div style="left:174.93px;top:148.65px;width:137.15px;height:4.04px;background:#f4f2ea;"></div>
<div style="left:174.93px;top:152.90px;width:29.42px;height:91.78px;background:#ffffff;"></div>
<div style="left:183.27px;top:162.46px;width:12.28px;height:3.19px;background:#316ac5;"></div>
<div style="left:179.56px;top:153.75px;width:3.01px;height:2.55px;background:#5aa8e0;"></div>
<div style="left:183.73px;top:154.17px;width:12.74px;height:1.49px;background:#a8a8a8;"></div>
<div style="left:179.56px;top:156.93px;width:3.01px;height:2.55px;background:#5aa8e0;"></div>
<div style="left:183.73px;top:157.36px;width:12.74px;height:1.49px;background:#a8a8a8;"></div>
<div style="left:179.56px;top:159.91px;width:3.01px;height:2.55px;background:#5aa8e0;"></div>
<div style="left:183.73px;top:160.33px;width:12.74px;height:1.49px;background:#a8a8a8;"></div>
<div style="left:179.56px;top:163.09px;width:3.01px;height:2.55px;background:#5aa8e0;"></div>
<div style="left:176.09px;top:234.05px;width:3.01px;height:2.55px;background:#5aa8e0;"></div>
<div style="left:180.25px;top:234.48px;width:9.27px;height:1.49px;background:#a8a8a8;"></div>
<div style="left:176.09px;top:237.67px;width:3.01px;height:2.55px;background:#5aa8e0;"></div>
<div style="left:180.25px;top:238.09px;width:9.27px;height:1.49px;background:#a8a8a8;"></div>
<div style="left:176.09px;top:241.28px;width:3.01px;height:2.55px;background:#5aa8e0;"></div>
<div style="left:180.25px;top:241.70px;width:9.27px;height:1.49px;background:#a8a8a8;"></div>
<div style="left:178.63px;top:146.52px;width:2.32px;height:1.49px;background:#909090;"></div>
<div style="left:183.27px;top:146.52px;width:3.24px;height:1.49px;background:#909090;"></div>
<div style="left:181.88px;top:149.92px;width:11.58px;height:1.49px;background:#909090;"></div>
<div style="left:205.28px;top:149.92px;width:3.71px;height:1.49px;background:#909090;"></div>
<div style="left:205.51px;top:155.87px;width:106.10px;height:88.38px;background:#fbfbf9;"></div>
<div style="left:205.51px;top:152.90px;width:15.75px;height:3.40px;background:#fcfcfe;"></div>
<div style="left:205.97px;top:156.51px;width:105.41px;height:5.95px;background:#efede2;"></div>
<div style="left:209.68px;top:158.63px;width:4.63px;height:1.49px;background:#909090;"></div>
<div style="left:215.24px;top:156.93px;width:9.27px;height:5.10px;background:#ffffff;"></div>
<div style="left:227.28px;top:158.63px;width:17.38px;height:1.49px;background:#909090;"></div>
<div style="left:253.00px;top:157.36px;width:23.17px;height:2.55px;background:#f8f8f8;"></div>
<div style="left:279.18px;top:158.63px;width:3.48px;height:1.49px;background:#909090;"></div>
<div style="left:206.20px;top:163.31px;width:50.73px;height:2.97px;background:#07098e;"></div>
<div style="left:206.90px;top:163.73px;width:6.02px;height:2.12px;background:#eeeef4;"></div>
<div style="left:213.62px;top:163.73px;width:13.21px;height:2.12px;background:#eeeef4;"></div>
<div style="left:206.20px;top:166.28px;width:50.73px;height:34.84px;background:#f0efe8;"></div>
<div style="left:206.20px;top:166.54px;width:50.73px;height:0.85px;background:linear-gradient(90deg,#3a6cd0,#6a98e0 30%,#98bcec 60%,#b0ccf0);"></div>
<div style="left:206.20px;top:167.39px;width:50.73px;height:3.51px;background:#f1f0ea;"></div>
<div style="left:208.40px;top:170.91px;width:38.34px;height:0.60px;background:#ffffff;"></div>
<div style="left:206.20px;top:170.91px;width:2.20px;height:0.60px;background:#e8e6dc;"></div>
<div style="left:206.20px;top:171.51px;width:1.16px;height:26.43px;background:#f4f3ee;"></div>
<div style="left:207.24px;top:171.51px;width:1.04px;height:26.00px;background:#bcbca8;"></div>
<div style="left:208.40px;top:171.51px;width:38.34px;height:26.00px;background:#ffffff;"></div>
<div style="left:246.86px;top:170.91px;width:1.16px;height:26.60px;background:#d2d2c2;"></div>
<div style="left:248.02px;top:170.91px;width:8.57px;height:26.60px;background:#ffffff;"></div>
<div style="left:256.59px;top:166.28px;width:0.60px;height:34.84px;background:#b8b8b0;"></div>
<div style="left:211.92px;top:183.92px;width:28.96px;height:11.47px;background:#ffffff;border:1px solid #5070b0"></div>
<div style="left:211.92px;top:183.92px;width:28.96px;height:0.60px;background:#3a6ad8;"></div>
<div style="left:212.16px;top:184.38px;width:2.32px;height:9.56px;background:#e8ecf4;"></div>
<div style="left:216.05px;top:194.11px;width:24.56px;height:0.85px;background:#101010;"></div>
<div style="left:218.25px;top:194.28px;width:6.95px;height:0.60px;background:#f0f0f0;"></div>
<div style="left:211.92px;top:195.28px;width:28.96px;height:0.60px;background:#3a60b8;"></div>
<div style="left:214.31px;top:170.96px;width:32.20px;height:22.84px;background:#2a54b8;"></div>
<div style="left:214.31px;top:170.96px;width:32.20px;height:0.99px;background:#1a5ae0;"></div>
<div style="left:214.52px;top:171.95px;width:31.77px;height:21.66px;background:#ece9d8;"></div>
<div style="left:214.52px;top:172.58px;width:31.77px;height:0.86px;background:#f4f2ea;"></div>
<div style="left:214.52px;top:173.48px;width:6.82px;height:19.50px;background:#ffffff;"></div>
<div style="left:216.46px;top:175.51px;width:2.84px;height:0.68px;background:#316ac5;"></div>
<div style="left:221.61px;top:174.12px;width:24.58px;height:18.78px;background:#fbfbf9;"></div>
<div style="left:221.61px;top:173.48px;width:3.65px;height:0.72px;background:#fcfcfe;"></div>
<div style="left:221.72px;top:174.25px;width:24.42px;height:1.26px;background:#efede2;"></div>
<div style="left:221.77px;top:175.69px;width:11.75px;height:0.63px;background:#07098e;"></div>
<div style="left:221.77px;top:176.33px;width:11.75px;height:7.40px;background:#f4f4f4;"></div>
<div style="left:233.79px;top:175.69px;width:11.65px;height:0.63px;background:#07098e;"></div>
<div style="left:233.79px;top:176.33px;width:11.65px;height:7.40px;background:#101010;"></div>
<div style="left:221.77px;top:183.95px;width:11.75px;height:0.63px;background:#07098e;"></div>
<div style="left:221.77px;top:184.59px;width:11.75px;height:7.40px;background:#3467a8;"></div>
<div style="left:233.79px;top:183.95px;width:11.65px;height:0.63px;background:#07098e;"></div>
<div style="left:233.79px;top:184.59px;width:11.65px;height:7.40px;background:#f4f4f4;"></div>
<div style="left:214.52px;top:192.98px;width:31.77px;height:0.63px;background:#ece9d8;"></div>
<div style="left:218.55px;top:193.12px;width:27.16px;height:0.60px;background:#fbfaf6;"></div>
<div style="left:206.20px;top:197.51px;width:50.73px;height:1.91px;background:#ecebe2;"></div>
<div style="left:206.20px;top:199.74px;width:50.73px;height:1.38px;background:linear-gradient(#3a78f0,#2458d8 40%,#1e50c8);"></div>
<div style="left:206.20px;top:199.74px;width:3.71px;height:1.38px;background:linear-gradient(#50b850,#2e8a2e);"></div>
<div style="left:258.10px;top:163.31px;width:50.27px;height:2.97px;background:#07098e;"></div>
<div style="left:258.79px;top:163.73px;width:6.02px;height:2.12px;background:#eeeef4;"></div>
<div style="left:265.51px;top:163.73px;width:13.21px;height:2.12px;background:#eeeef4;"></div>
<div style="left:258.10px;top:166.28px;width:50.27px;height:34.84px;background:#3467a8;"></div>
<div style="left:259.83px;top:166.28px;width:48.53px;height:32.93px;background:#000000;"></div>
<div style="left:259.83px;top:166.60px;width:48.53px;height:0.96px;background:#d4d4d4;"></div>
<div style="left:307.21px;top:167.56px;width:1.16px;height:31.66px;background:#e0e0e0;"></div>
<div style="left:259.83px;top:198.68px;width:47.38px;height:0.60px;background:#303030;"></div>
<div style="left:259.72px;top:169.15px;width:47.26px;height:27.94px;background:#000000;"></div>
<div style="left:259.72px;top:169.26px;width:47.26px;height:0.85px;background:linear-gradient(90deg,#2a58c0,#5080d0 40%,#a0bce8 80%,#b8d0f0);"></div>
<div style="left:305.93px;top:170.11px;width:1.04px;height:25.81px;background:#e4e4e4;"></div>
<div style="left:259.72px;top:195.92px;width:47.26px;height:1.17px;background:#e4e4e4;"></div>
<div style="left:258.10px;top:199.11px;width:50.27px;height:2.02px;background:#d4d0c8;"></div>
<div style="left:258.10px;top:199.11px;width:50.27px;height:0.60px;background:#f8f8f8;"></div>
<div style="left:206.20px;top:202.19px;width:50.73px;height:2.97px;background:#07098e;"></div>
<div style="left:206.90px;top:202.61px;width:6.02px;height:2.12px;background:#eeeef4;"></div>
<div style="left:213.62px;top:202.61px;width:13.21px;height:2.12px;background:#eeeef4;"></div>
<div style="left:206.20px;top:205.16px;width:50.73px;height:34.84px;background:#3467a8;"></div>
<div style="left:207.36px;top:205.80px;width:1.62px;height:1.27px;background:#a8c0d8;"></div>
<div style="left:207.36px;top:209.20px;width:1.62px;height:1.27px;background:#a8c0d8;"></div>
<div style="left:207.36px;top:212.60px;width:1.62px;height:1.27px;background:#a8c0d8;"></div>
<div style="left:207.36px;top:216.00px;width:1.62px;height:1.27px;background:#a8c0d8;"></div>
<div style="left:207.36px;top:219.39px;width:1.62px;height:1.27px;background:#a8c0d8;"></div>
<div style="left:207.36px;top:222.79px;width:1.62px;height:1.27px;background:#a8c0d8;"></div>
<div style="left:207.36px;top:226.19px;width:1.62px;height:1.27px;background:#a8c0d8;"></div>
<div style="left:207.36px;top:229.59px;width:1.62px;height:1.27px;background:#a8c0d8;"></div>
<div style="left:207.36px;top:232.99px;width:1.62px;height:1.27px;background:#a8c0d8;"></div>
<div style="left:211.07px;top:205.80px;width:1.62px;height:1.27px;background:#a8c0d8;"></div>
<div style="left:211.07px;top:209.20px;width:1.62px;height:1.27px;background:#a8c0d8;"></div>
<div style="left:211.07px;top:212.60px;width:1.62px;height:1.27px;background:#a8c0d8;"></div>
<div style="left:211.07px;top:216.00px;width:1.62px;height:1.27px;background:#a8c0d8;"></div>
<div style="left:211.07px;top:219.39px;width:1.62px;height:1.27px;background:#a8c0d8;"></div>
<div style="left:211.07px;top:222.79px;width:1.62px;height:1.27px;background:#a8c0d8;"></div>
<div style="left:211.07px;top:226.19px;width:1.62px;height:1.27px;background:#a8c0d8;"></div>
<div style="left:211.07px;top:229.59px;width:1.62px;height:1.27px;background:#a8c0d8;"></div>
<div style="left:211.07px;top:232.99px;width:1.62px;height:1.27px;background:#a8c0d8;"></div>
<div style="left:214.77px;top:205.80px;width:1.62px;height:1.27px;background:#a8c0d8;"></div>
<div style="left:214.77px;top:209.20px;width:1.62px;height:1.27px;background:#a8c0d8;"></div>
<div style="left:214.77px;top:212.60px;width:1.62px;height:1.27px;background:#a8c0d8;"></div>
<div style="left:214.77px;top:216.00px;width:1.62px;height:1.27px;background:#a8c0d8;"></div>
<div style="left:214.77px;top:219.39px;width:1.62px;height:1.27px;background:#a8c0d8;"></div>
<div style="left:214.77px;top:222.79px;width:1.62px;height:1.27px;background:#a8c0d8;"></div>
<div style="left:214.77px;top:226.19px;width:1.62px;height:1.27px;background:#a8c0d8;"></div>
<div style="left:214.77px;top:229.59px;width:1.62px;height:1.27px;background:#a8c0d8;"></div>
<div style="left:206.20px;top:238.51px;width:50.73px;height:1.49px;background:#d4d0c8;"></div>
<div style="left:258.10px;top:202.19px;width:50.27px;height:2.97px;background:#07098e;"></div>
<div style="left:258.79px;top:202.61px;width:6.02px;height:2.12px;background:#eeeef4;"></div>
<div style="left:265.51px;top:202.61px;width:13.21px;height:2.12px;background:#eeeef4;"></div>
<div style="left:258.10px;top:205.16px;width:50.27px;height:34.84px;background:#f0efe8;"></div>
<div style="left:258.10px;top:205.42px;width:50.27px;height:0.85px;background:linear-gradient(90deg,#3a6cd0,#6a98e0 30%,#98bcec 60%,#b0ccf0);"></div>
<div style="left:258.10px;top:206.26px;width:50.27px;height:3.51px;background:#f1f0ea;"></div>
<div style="left:260.28px;top:209.79px;width:37.99px;height:0.60px;background:#ffffff;"></div>
<div style="left:258.10px;top:209.79px;width:2.18px;height:0.60px;background:#e8e6dc;"></div>
<div style="left:258.10px;top:210.39px;width:1.15px;height:26.43px;background:#f4f3ee;"></div>
<div style="left:259.13px;top:210.39px;width:1.03px;height:26.00px;background:#bcbca8;"></div>
<div style="left:260.28px;top:210.39px;width:37.99px;height:26.00px;background:#ffffff;"></div>
<div style="left:298.38px;top:209.79px;width:1.15px;height:26.60px;background:#d2d2c2;"></div>
<div style="left:299.53px;top:209.79px;width:8.49px;height:26.60px;background:#ffffff;"></div>
<div style="left:308.02px;top:205.16px;width:0.60px;height:34.84px;background:#b8b8b0;"></div>
<div style="left:263.76px;top:222.79px;width:28.69px;height:11.47px;background:#ffffff;border:1px solid #5070b0"></div>
<div style="left:263.76px;top:222.79px;width:28.69px;height:0.60px;background:#3a6ad8;"></div>
<div style="left:263.99px;top:223.26px;width:2.30px;height:9.56px;background:#e8ecf4;"></div>
<div style="left:267.85px;top:232.99px;width:24.33px;height:0.85px;background:#101010;"></div>
<div style="left:270.03px;top:233.16px;width:6.89px;height:0.60px;background:#f0f0f0;"></div>
<div style="left:263.76px;top:234.16px;width:28.69px;height:0.60px;background:#3a60b8;"></div>
<div style="left:266.13px;top:209.83px;width:31.91px;height:22.84px;background:#2a54b8;"></div>
<div style="left:266.13px;top:209.83px;width:31.91px;height:0.99px;background:#1a5ae0;"></div>
<div style="left:266.34px;top:210.83px;width:31.48px;height:21.66px;background:#ece9d8;"></div>
<div style="left:266.34px;top:211.46px;width:31.48px;height:0.86px;background:#f4f2ea;"></div>
<div style="left:266.34px;top:212.36px;width:6.75px;height:19.50px;background:#ffffff;"></div>
<div style="left:268.26px;top:214.39px;width:2.82px;height:0.68px;background:#316ac5;"></div>
<div style="left:273.36px;top:212.99px;width:24.36px;height:18.78px;background:#fbfbf9;"></div>
<div style="left:273.36px;top:212.36px;width:3.62px;height:0.72px;background:#fcfcfe;"></div>
<div style="left:273.47px;top:213.13px;width:24.20px;height:1.26px;background:#efede2;"></div>
<div style="left:273.52px;top:214.57px;width:11.65px;height:0.63px;background:#07098e;"></div>
<div style="left:273.52px;top:215.21px;width:11.65px;height:7.40px;background:#f4f4f4;"></div>
<div style="left:285.43px;top:214.57px;width:11.54px;height:0.63px;background:#07098e;"></div>
<div style="left:285.43px;top:215.21px;width:11.54px;height:7.40px;background:#101010;"></div>
<div style="left:273.52px;top:222.83px;width:11.65px;height:0.63px;background:#07098e;"></div>
<div style="left:273.52px;top:223.46px;width:11.65px;height:7.40px;background:#3467a8;"></div>
<div style="left:285.43px;top:222.83px;width:11.54px;height:0.63px;background:#07098e;"></div>
<div style="left:285.43px;top:223.46px;width:11.54px;height:7.40px;background:#f4f4f4;"></div>
<div style="left:266.34px;top:231.86px;width:31.48px;height:0.63px;background:#ece9d8;"></div>
<div style="left:270.33px;top:232.00px;width:26.91px;height:0.60px;background:#fbfaf6;"></div>
<div style="left:258.10px;top:236.39px;width:50.27px;height:1.91px;background:#ecebe2;"></div>
<div style="left:258.10px;top:238.62px;width:50.27px;height:1.38px;background:linear-gradient(#3a78f0,#2458d8 40%,#1e50c8);"></div>
<div style="left:258.10px;top:238.62px;width:3.67px;height:1.38px;background:linear-gradient(#50b850,#2e8a2e);"></div>
<div style="left:174.93px;top:244.68px;width:137.15px;height:2.97px;background:#ece9d8;"></div>
<div style="left:192.30px;top:245.31px;width:117.22px;height:2.34px;background:#fbfaf6;"></div>
<div style="left:139.00px;top:266.00px;width:219.00px;height:9.00px;background:#ecebe2;"></div>
<div style="left:140.00px;top:269.50px;width:2.74px;height:2.50px;background:#606060;"></div>
<div style="left:144.94px;top:269.50px;width:3.52px;height:2.50px;background:#606060;"></div>
<div style="left:150.24px;top:269.50px;width:2.30px;height:2.50px;background:#606060;"></div>
<div style="left:154.99px;top:269.50px;width:2.72px;height:2.50px;background:#606060;"></div>
<div style="left:159.55px;top:269.50px;width:2.51px;height:2.50px;background:#606060;"></div>
<div style="left:163.86px;top:269.50px;width:1.92px;height:2.50px;background:#606060;"></div>
<div style="left:168.12px;top:269.50px;width:3.73px;height:2.50px;background:#606060;"></div>
<div style="left:174.29px;top:269.50px;width:3.09px;height:2.50px;background:#606060;"></div>
<div style="left:179.18px;top:269.50px;width:2.58px;height:2.50px;background:#606060;"></div>
<div style="left:183.23px;top:269.50px;width:3.32px;height:2.50px;background:#606060;"></div>
<div style="left:188.28px;top:269.50px;width:2.23px;height:2.50px;background:#606060;"></div>
<div style="left:193.48px;top:269.50px;width:2.35px;height:2.50px;background:#606060;"></div>
<div style="left:198.79px;top:269.50px;width:3.04px;height:2.50px;background:#606060;"></div>
<div style="left:204.41px;top:269.50px;width:3.07px;height:2.50px;background:#606060;"></div>
<div style="left:209.00px;top:269.50px;width:3.28px;height:2.50px;background:#606060;"></div>
<div style="left:213.95px;top:269.50px;width:2.52px;height:2.50px;background:#606060;"></div>
<div style="left:217.90px;top:269.50px;width:1.65px;height:2.50px;background:#606060;"></div>
<div style="left:221.41px;top:269.50px;width:1.54px;height:2.50px;background:#606060;"></div>
<div style="left:224.84px;top:269.50px;width:3.63px;height:2.50px;background:#606060;"></div>
<div style="left:231.46px;top:269.50px;width:2.56px;height:2.50px;background:#606060;"></div>
<div style="left:235.41px;top:269.50px;width:2.37px;height:2.50px;background:#606060;"></div>
<div style="left:239.09px;top:269.50px;width:2.04px;height:2.50px;background:#606060;"></div>
<div style="left:243.45px;top:269.50px;width:3.04px;height:2.50px;background:#606060;"></div>
<div style="left:247.75px;top:269.50px;width:2.72px;height:2.50px;background:#606060;"></div>
<div style="left:252.43px;top:269.50px;width:2.49px;height:2.50px;background:#606060;"></div>
<div style="left:256.37px;top:269.50px;width:2.48px;height:2.50px;background:#606060;"></div>
<div style="left:260.24px;top:269.50px;width:3.22px;height:2.50px;background:#606060;"></div>
<div style="left:265.82px;top:269.50px;width:3.07px;height:2.50px;background:#606060;"></div>
<div style="left:270.83px;top:269.50px;width:3.89px;height:2.50px;background:#606060;"></div>
<div style="left:276.58px;top:269.50px;width:2.01px;height:2.50px;background:#606060;"></div>
<div style="left:280.46px;top:269.50px;width:3.78px;height:2.50px;background:#606060;"></div>
<div style="left:285.73px;top:269.50px;width:3.41px;height:2.50px;background:#606060;"></div>
<div style="left:292.03px;top:269.50px;width:3.63px;height:2.50px;background:#606060;"></div>
<div style="left:297.69px;top:269.50px;width:1.31px;height:2.50px;background:#606060;"></div>
<div style="left:139.00px;top:276.50px;width:219.00px;height:6.50px;background:linear-gradient(#3a78f0,#2458d8 40%,#1e50c8);"></div>
<div style="left:139.00px;top:276.50px;width:16.00px;height:6.50px;background:linear-gradient(#50b850,#2e8a2e);"></div>
<div style="left:144.00px;top:279.00px;width:4.00px;height:1.50px;background:#ffffff;"></div>
<div style="left:159.00px;top:278.50px;width:3.00px;height:3.00px;background:#c0d8ff;"></div>
<div style="left:167.00px;top:278.50px;width:3.00px;height:3.00px;background:#c0d8ff;"></div>
<div style="left:175.00px;top:278.50px;width:3.00px;height:3.00px;background:#c0d8ff;"></div>
<div style="left:184.00px;top:278.00px;width:25.00px;height:4.00px;background:#4a80ec;"></div>
<div style="left:186.00px;top:279.50px;width:3.36px;height:1.20px;background:#d0e0ff;"></div>
<div style="left:191.02px;top:279.50px;width:2.41px;height:1.20px;background:#d0e0ff;"></div>
<div style="left:194.88px;top:279.50px;width:2.36px;height:1.20px;background:#d0e0ff;"></div>
<div style="left:198.22px;top:279.50px;width:3.42px;height:1.20px;background:#d0e0ff;"></div>
<div style="left:202.77px;top:279.50px;width:1.23px;height:1.20px;background:#d0e0ff;"></div>
<div style="left:211.00px;top:278.00px;width:25.00px;height:4.00px;background:#4a80ec;"></div>
<div style="left:213.00px;top:279.50px;width:2.37px;height:1.20px;background:#d0e0ff;"></div>
<div style="left:217.18px;top:279.50px;width:6.95px;height:1.20px;background:#d0e0ff;"></div>
<div style="left:225.59px;top:279.50px;width:4.72px;height:1.20px;background:#d0e0ff;"></div>
<div style="left:238.00px;top:278.00px;width:25.00px;height:4.00px;background:#4a80ec;"></div>
<div style="left:240.00px;top:279.50px;width:4.02px;height:1.20px;background:#d0e0ff;"></div>
<div style="left:245.27px;top:279.50px;width:2.89px;height:1.20px;background:#d0e0ff;"></div>
<div style="left:249.48px;top:279.50px;width:5.80px;height:1.20px;background:#d0e0ff;"></div>
<div style="left:256.60px;top:279.50px;width:1.40px;height:1.20px;background:#d0e0ff;"></div>
<div style="left:265.00px;top:278.00px;width:25.00px;height:4.00px;background:#4a80ec;"></div>
<div style="left:267.00px;top:279.50px;width:4.86px;height:1.20px;background:#d0e0ff;"></div>
<div style="left:273.66px;top:279.50px;width:4.28px;height:1.20px;background:#d0e0ff;"></div>
<div style="left:279.83px;top:279.50px;width:4.36px;height:1.20px;background:#d0e0ff;"></div>
<div style="left:292.00px;top:278.00px;width:25.00px;height:4.00px;background:#4a80ec;"></div>
<div style="left:294.00px;top:279.50px;width:6.97px;height:1.20px;background:#d0e0ff;"></div>
<div style="left:302.04px;top:279.50px;width:3.30px;height:1.20px;background:#d0e0ff;"></div>
<div style="left:307.52px;top:279.50px;width:4.48px;height:1.20px;background:#d0e0ff;"></div>
<div style="left:319.00px;top:278.00px;width:25.00px;height:4.00px;background:#4a80ec;"></div>
<div style="left:321.00px;top:279.50px;width:2.72px;height:1.20px;background:#d0e0ff;"></div>
<div style="left:325.65px;top:279.50px;width:5.09px;height:1.20px;background:#d0e0ff;"></div>
<div style="left:331.88px;top:279.50px;width:4.53px;height:1.20px;background:#d0e0ff;"></div>
<div style="left:337.73px;top:279.50px;width:1.27px;height:1.20px;background:#d0e0ff;"></div>
<div style="left:344.00px;top:276.50px;width:14.00px;height:6.50px;background:#1890e8;"></div>
<div style="left:363.00px;top:119.00px;width:217.00px;height:164.00px;background:#3467a8;"></div>
<div style="left:370.50px;top:119.00px;width:209.50px;height:155.00px;background:#000000;"></div>
<div style="left:370.50px;top:120.50px;width:209.50px;height:4.50px;background:#d4d4d4;"></div>
<div style="left:575.00px;top:125.00px;width:5.00px;height:149.00px;background:#e0e0e0;"></div>
<div style="left:370.50px;top:271.50px;width:204.50px;height:1.50px;background:#303030;"></div>
<div style="left:373.00px;top:122.20px;width:2.67px;height:0.90px;background:#909090;"></div>
<div style="left:377.85px;top:122.20px;width:5.82px;height:0.90px;background:#909090;"></div>
<div style="left:385.00px;top:122.20px;width:4.48px;height:0.90px;background:#909090;"></div>
<div style="left:391.08px;top:122.20px;width:5.26px;height:0.90px;background:#909090;"></div>
<div style="left:398.44px;top:122.20px;width:2.47px;height:0.90px;background:#909090;"></div>
<div style="left:401.91px;top:122.20px;width:6.18px;height:0.90px;background:#909090;"></div>
<div style="left:409.67px;top:122.20px;width:3.33px;height:0.90px;background:#909090;"></div>
<div style="left:563.00px;top:121.20px;width:3.50px;height:3.00px;background:#a0a0a0;"></div>
<div style="left:567.50px;top:121.20px;width:3.50px;height:3.00px;background:#a0a0a0;"></div>
<div style="left:572.00px;top:121.20px;width:3.50px;height:3.00px;background:#808080;"></div>
<div style="left:373.00px;top:126.80px;width:6.78px;height:0.90px;background:#9a9a9a;"></div>
<div style="left:382.11px;top:126.80px;width:2.28px;height:0.90px;background:#9a9a9a;"></div>
<div style="left:385.47px;top:126.80px;width:6.18px;height:0.90px;background:#9a9a9a;"></div>
<div style="left:393.67px;top:126.80px;width:5.35px;height:0.90px;background:#9a9a9a;"></div>
<div style="left:400.42px;top:126.80px;width:5.03px;height:0.90px;background:#9a9a9a;"></div>
<div style="left:407.28px;top:126.80px;width:4.91px;height:0.90px;background:#9a9a9a;"></div>
<div style="left:413.38px;top:126.80px;width:4.15px;height:0.90px;background:#9a9a9a;"></div>
<div style="left:419.06px;top:126.80px;width:5.62px;height:0.90px;background:#9a9a9a;"></div>
<div style="left:427.06px;top:126.80px;width:6.75px;height:0.90px;background:#9a9a9a;"></div>
<div style="left:435.56px;top:126.80px;width:4.22px;height:0.90px;background:#9a9a9a;"></div>
<div style="left:441.13px;top:126.80px;width:2.18px;height:0.90px;background:#9a9a9a;"></div>
<div style="left:444.31px;top:126.80px;width:4.32px;height:0.90px;background:#9a9a9a;"></div>
<div style="left:450.05px;top:126.80px;width:3.90px;height:0.90px;background:#9a9a9a;"></div>
<div style="left:456.19px;top:126.80px;width:4.63px;height:0.90px;background:#9a9a9a;"></div>
<div style="left:462.59px;top:126.80px;width:3.18px;height:0.90px;background:#9a9a9a;"></div>
<div style="left:466.76px;top:126.80px;width:3.63px;height:0.90px;background:#9a9a9a;"></div>
<div style="left:471.55px;top:126.80px;width:4.55px;height:0.90px;background:#9a9a9a;"></div>
<div style="left:478.50px;top:126.80px;width:5.37px;height:0.90px;background:#9a9a9a;"></div>
<div style="left:485.09px;top:126.80px;width:6.47px;height:0.90px;background:#9a9a9a;"></div>
<div style="left:373.00px;top:129.80px;width:3.19px;height:0.90px;background:#9a9a9a;"></div>
<div style="left:377.93px;top:129.80px;width:3.85px;height:0.90px;background:#9a9a9a;"></div>
<div style="left:383.61px;top:129.80px;width:5.13px;height:0.90px;background:#9a9a9a;"></div>
<div style="left:389.80px;top:129.80px;width:2.07px;height:0.90px;background:#9a9a9a;"></div>
<div style="left:394.03px;top:129.80px;width:3.30px;height:0.90px;background:#9a9a9a;"></div>
<div style="left:398.62px;top:129.80px;width:6.98px;height:0.90px;background:#9a9a9a;"></div>
<div style="left:407.24px;top:129.80px;width:6.18px;height:0.90px;background:#9a9a9a;"></div>
<div style="left:415.07px;top:129.80px;width:5.20px;height:0.90px;background:#9a9a9a;"></div>
<div style="left:421.44px;top:129.80px;width:5.17px;height:0.90px;background:#9a9a9a;"></div>
<div style="left:428.82px;top:129.80px;width:4.62px;height:0.90px;background:#9a9a9a;"></div>
<div style="left:435.47px;top:129.80px;width:5.36px;height:0.90px;background:#9a9a9a;"></div>
<div style="left:441.87px;top:129.80px;width:1.13px;height:0.90px;background:#9a9a9a;"></div>
<div style="left:370.00px;top:132.50px;width:204.00px;height:131.50px;background:#000000;"></div>
<div style="left:370.00px;top:133.00px;width:204.00px;height:4.00px;background:linear-gradient(90deg,#2a58c0,#5080d0 40%,#a0bce8 80%,#b8d0f0);"></div>
<div style="left:569.50px;top:137.00px;width:4.50px;height:121.50px;background:#e4e4e4;"></div>
<div style="left:370.00px;top:258.50px;width:204.00px;height:5.50px;background:#e4e4e4;"></div>
<div style="left:372.50px;top:134.00px;width:2.50px;height:2.00px;background:#e0e0ff;"></div>
<div style="left:377.00px;top:134.50px;width:3.18px;height:0.90px;background:#d8e0f8;"></div>
<div style="left:381.29px;top:134.50px;width:3.98px;height:0.90px;background:#d8e0f8;"></div>
<div style="left:386.45px;top:134.50px;width:2.33px;height:0.90px;background:#d8e0f8;"></div>
<div style="left:390.32px;top:134.50px;width:6.59px;height:0.90px;background:#d8e0f8;"></div>
<div style="left:399.03px;top:134.50px;width:5.83px;height:0.90px;background:#d8e0f8;"></div>
<div style="left:406.13px;top:134.50px;width:4.68px;height:0.90px;background:#d8e0f8;"></div>
<div style="left:412.17px;top:134.50px;width:0.83px;height:0.90px;background:#d8e0f8;"></div>
<div style="left:563.00px;top:133.80px;width:3.00px;height:2.60px;background:#707070;"></div>
<div style="left:567.00px;top:133.80px;width:3.00px;height:2.60px;background:#707070;"></div>
<div style="left:373.00px;top:139.30px;width:5.11px;height:0.90px;background:#a8a8a8;"></div>
<div style="left:380.14px;top:139.30px;width:5.98px;height:0.90px;background:#a8a8a8;"></div>
<div style="left:388.44px;top:139.30px;width:5.70px;height:0.90px;background:#a8a8a8;"></div>
<div style="left:396.42px;top:139.30px;width:2.15px;height:0.90px;background:#a8a8a8;"></div>
<div style="left:400.20px;top:139.30px;width:6.72px;height:0.90px;background:#a8a8a8;"></div>
<div style="left:408.81px;top:139.30px;width:6.50px;height:0.90px;background:#a8a8a8;"></div>
<div style="left:416.44px;top:139.30px;width:4.35px;height:0.90px;background:#a8a8a8;"></div>
<div style="left:422.10px;top:139.30px;width:4.72px;height:0.90px;background:#a8a8a8;"></div>
<div style="left:428.60px;top:139.30px;width:2.07px;height:0.90px;background:#a8a8a8;"></div>
<div style="left:431.94px;top:139.30px;width:3.40px;height:0.90px;background:#a8a8a8;"></div>
<div style="left:437.62px;top:139.30px;width:5.83px;height:0.90px;background:#a8a8a8;"></div>
<div style="left:444.64px;top:139.30px;width:5.99px;height:0.90px;background:#a8a8a8;"></div>
<div style="left:451.78px;top:139.30px;width:5.09px;height:0.90px;background:#a8a8a8;"></div>
<div style="left:458.01px;top:139.30px;width:2.01px;height:0.90px;background:#a8a8a8;"></div>
<div style="left:462.24px;top:139.30px;width:3.05px;height:0.90px;background:#a8a8a8;"></div>
<div style="left:466.55px;top:139.30px;width:6.91px;height:0.90px;background:#a8a8a8;"></div>
<div style="left:475.68px;top:139.30px;width:3.45px;height:0.90px;background:#a8a8a8;"></div>
<div style="left:481.47px;top:139.30px;width:4.70px;height:0.90px;background:#a8a8a8;"></div>
<div style="left:488.10px;top:139.30px;width:3.02px;height:0.90px;background:#a8a8a8;"></div>
<div style="left:493.44px;top:139.30px;width:5.45px;height:0.90px;background:#a8a8a8;"></div>
<div style="left:501.25px;top:139.30px;width:6.47px;height:0.90px;background:#a8a8a8;"></div>
<div style="left:509.11px;top:139.30px;width:3.81px;height:0.90px;background:#a8a8a8;"></div>
<div style="left:514.11px;top:139.30px;width:2.73px;height:0.90px;background:#a8a8a8;"></div>
<div style="left:517.89px;top:139.30px;width:3.51px;height:0.90px;background:#a8a8a8;"></div>
<div style="left:523.23px;top:139.30px;width:2.02px;height:0.90px;background:#a8a8a8;"></div>
<div style="left:527.18px;top:139.30px;width:0.82px;height:0.90px;background:#a8a8a8;"></div>
<div style="left:373.00px;top:144.20px;width:5.97px;height:0.90px;background:#a0a0a0;"></div>
<div style="left:381.11px;top:144.20px;width:4.43px;height:0.90px;background:#a0a0a0;"></div>
<div style="left:386.87px;top:144.20px;width:2.00px;height:0.90px;background:#a0a0a0;"></div>
<div style="left:390.79px;top:144.20px;width:4.35px;height:0.90px;background:#a0a0a0;"></div>
<div style="left:397.19px;top:144.20px;width:3.87px;height:0.90px;background:#a0a0a0;"></div>
<div style="left:403.13px;top:144.20px;width:3.36px;height:0.90px;background:#a0a0a0;"></div>
<div style="left:408.61px;top:144.20px;width:5.65px;height:0.90px;background:#a0a0a0;"></div>
<div style="left:415.81px;top:144.20px;width:4.69px;height:0.90px;background:#a0a0a0;"></div>
<div style="left:422.45px;top:144.20px;width:2.96px;height:0.90px;background:#a0a0a0;"></div>
<div style="left:427.17px;top:144.20px;width:6.03px;height:0.90px;background:#a0a0a0;"></div>
<div style="left:434.54px;top:144.20px;width:6.02px;height:0.90px;background:#a0a0a0;"></div>
<div style="left:442.50px;top:144.20px;width:6.22px;height:0.90px;background:#a0a0a0;"></div>
<div style="left:450.17px;top:144.20px;width:2.47px;height:0.90px;background:#a0a0a0;"></div>
<div style="left:454.74px;top:144.20px;width:6.02px;height:0.90px;background:#a0a0a0;"></div>
<div style="left:462.37px;top:144.20px;width:2.47px;height:0.90px;background:#a0a0a0;"></div>
<div style="left:466.08px;top:144.20px;width:5.17px;height:0.90px;background:#a0a0a0;"></div>
<div style="left:472.64px;top:144.20px;width:6.76px;height:0.90px;background:#a0a0a0;"></div>
<div style="left:481.20px;top:144.20px;width:3.00px;height:0.90px;background:#a0a0a0;"></div>
<div style="left:486.11px;top:144.20px;width:3.80px;height:0.90px;background:#a0a0a0;"></div>
<div style="left:492.21px;top:144.20px;width:6.55px;height:0.90px;background:#a0a0a0;"></div>
<div style="left:500.46px;top:144.20px;width:5.22px;height:0.90px;background:#a0a0a0;"></div>
<div style="left:507.65px;top:144.20px;width:6.03px;height:0.90px;background:#a0a0a0;"></div>
<div style="left:516.04px;top:144.20px;width:2.14px;height:0.90px;background:#a0a0a0;"></div>
<div style="left:519.67px;top:144.20px;width:5.01px;height:0.90px;background:#a0a0a0;"></div>
<div style="left:526.07px;top:144.20px;width:4.95px;height:0.90px;background:#a0a0a0;"></div>
<div style="left:532.11px;top:144.20px;width:6.40px;height:0.90px;background:#a0a0a0;"></div>
<div style="left:540.22px;top:144.20px;width:2.58px;height:0.90px;background:#a0a0a0;"></div>
<div style="left:544.72px;top:144.20px;width:3.56px;height:0.90px;background:#a0a0a0;"></div>
<div style="left:549.53px;top:144.20px;width:4.42px;height:0.90px;background:#a0a0a0;"></div>
<div style="left:555.10px;top:144.20px;width:3.05px;height:0.90px;background:#a0a0a0;"></div>
<div style="left:560.36px;top:144.20px;width:2.64px;height:0.90px;background:#a0a0a0;"></div>
<div style="left:377.00px;top:149.20px;width:3.62px;height:0.90px;background:#888888;"></div>
<div style="left:381.80px;top:149.20px;width:5.25px;height:0.90px;background:#888888;"></div>
<div style="left:388.12px;top:149.20px;width:4.68px;height:0.90px;background:#888888;"></div>
<div style="left:394.28px;top:149.20px;width:2.29px;height:0.90px;background:#888888;"></div>
<div style="left:398.26px;top:149.20px;width:2.19px;height:0.90px;background:#888888;"></div>
<div style="left:402.03px;top:149.20px;width:2.35px;height:0.90px;background:#888888;"></div>
<div style="left:405.47px;top:149.20px;width:4.12px;height:0.90px;background:#888888;"></div>
<div style="left:411.75px;top:149.20px;width:2.62px;height:0.90px;background:#888888;"></div>
<div style="left:415.65px;top:149.20px;width:5.14px;height:0.90px;background:#888888;"></div>
<div style="left:423.11px;top:149.20px;width:4.89px;height:0.90px;background:#888888;"></div>
<div style="left:429.53px;top:149.20px;width:6.88px;height:0.90px;background:#888888;"></div>
<div style="left:437.43px;top:149.20px;width:5.57px;height:0.90px;background:#888888;"></div>
<div style="left:374.00px;top:154.00px;width:6.45px;height:0.90px;background:#a0a0a0;"></div>
<div style="left:382.57px;top:154.00px;width:4.01px;height:0.90px;background:#a0a0a0;"></div>
<div style="left:388.50px;top:154.00px;width:5.26px;height:0.90px;background:#a0a0a0;"></div>
<div style="left:396.12px;top:154.00px;width:0.83px;height:0.90px;background:#a0a0a0;"></div>
<div style="left:422.00px;top:154.00px;width:6.63px;height:0.90px;background:#a8a8a8;"></div>
<div style="left:430.78px;top:154.00px;width:3.98px;height:0.90px;background:#a8a8a8;"></div>
<div style="left:436.16px;top:154.00px;width:0.97px;height:0.90px;background:#a8a8a8;"></div>
<div style="left:374.00px;top:157.60px;width:5.11px;height:0.90px;background:#a0a0a0;"></div>
<div style="left:381.06px;top:157.60px;width:4.68px;height:0.90px;background:#a0a0a0;"></div>
<div style="left:387.30px;top:157.60px;width:6.91px;height:0.90px;background:#a0a0a0;"></div>
<div style="left:395.21px;top:157.60px;width:6.50px;height:0.90px;background:#a0a0a0;"></div>
<div style="left:403.03px;top:157.60px;width:1.59px;height:0.90px;background:#a0a0a0;"></div>
<div style="left:422.00px;top:157.60px;width:4.81px;height:0.90px;background:#a8a8a8;"></div>
<div style="left:428.92px;top:157.60px;width:5.59px;height:0.90px;background:#a8a8a8;"></div>
<div style="left:435.56px;top:157.60px;width:3.35px;height:0.90px;background:#a8a8a8;"></div>
<div style="left:374.00px;top:161.20px;width:3.93px;height:0.90px;background:#a0a0a0;"></div>
<div style="left:378.90px;top:161.20px;width:3.80px;height:0.90px;background:#a0a0a0;"></div>
<div style="left:422.00px;top:161.20px;width:3.36px;height:0.90px;background:#a8a8a8;"></div>
<div style="left:427.11px;top:161.20px;width:5.09px;height:0.90px;background:#a8a8a8;"></div>
<div style="left:433.49px;top:161.20px;width:3.40px;height:0.90px;background:#a8a8a8;"></div>
<div style="left:438.08px;top:161.20px;width:1.13px;height:0.90px;background:#a8a8a8;"></div>
<div style="left:374.00px;top:164.80px;width:2.36px;height:0.90px;background:#a0a0a0;"></div>
<div style="left:378.08px;top:164.80px;width:2.33px;height:0.90px;background:#a0a0a0;"></div>
<div style="left:382.79px;top:164.80px;width:4.54px;height:0.90px;background:#a0a0a0;"></div>
<div style="left:389.24px;top:164.80px;width:3.77px;height:0.90px;background:#a0a0a0;"></div>
<div style="left:394.71px;top:164.80px;width:2.86px;height:0.90px;background:#a0a0a0;"></div>
<div style="left:374.00px;top:168.40px;width:5.13px;height:0.90px;background:#a0a0a0;"></div>
<div style="left:381.09px;top:168.40px;width:3.63px;height:0.90px;background:#a0a0a0;"></div>
<div style="left:422.00px;top:168.40px;width:6.22px;height:0.90px;background:#a8a8a8;"></div>
<div style="left:374.00px;top:172.00px;width:6.39px;height:0.90px;background:#a0a0a0;"></div>
<div style="left:381.51px;top:172.00px;width:6.05px;height:0.90px;background:#a0a0a0;"></div>
<div style="left:389.72px;top:172.00px;width:5.33px;height:0.90px;background:#a0a0a0;"></div>
<div style="left:422.00px;top:172.00px;width:4.18px;height:0.90px;background:#a8a8a8;"></div>
<div style="left:374.00px;top:175.60px;width:5.98px;height:0.90px;background:#a0a0a0;"></div>
<div style="left:381.64px;top:175.60px;width:5.56px;height:0.90px;background:#a0a0a0;"></div>
<div style="left:422.00px;top:175.60px;width:3.48px;height:0.90px;background:#a8a8a8;"></div>
<div style="left:427.85px;top:175.60px;width:4.48px;height:0.90px;background:#a8a8a8;"></div>
<div style="left:433.74px;top:175.60px;width:5.09px;height:0.90px;background:#a8a8a8;"></div>
<div style="left:374.00px;top:179.20px;width:4.01px;height:0.90px;background:#a0a0a0;"></div>
<div style="left:379.45px;top:179.20px;width:5.68px;height:0.90px;background:#a0a0a0;"></div>
<div style="left:386.75px;top:179.20px;width:5.01px;height:0.90px;background:#a0a0a0;"></div>
<div style="left:393.27px;top:179.20px;width:5.93px;height:0.90px;background:#a0a0a0;"></div>
<div style="left:422.00px;top:179.20px;width:5.17px;height:0.90px;background:#a8a8a8;"></div>
<div style="left:428.17px;top:179.20px;width:3.48px;height:0.90px;background:#a8a8a8;"></div>
<div style="left:433.73px;top:179.20px;width:3.43px;height:0.90px;background:#a8a8a8;"></div>
<div style="left:374.00px;top:182.80px;width:5.16px;height:0.90px;background:#a0a0a0;"></div>
<div style="left:380.80px;top:182.80px;width:4.53px;height:0.90px;background:#a0a0a0;"></div>
<div style="left:422.00px;top:182.80px;width:5.74px;height:0.90px;background:#a8a8a8;"></div>
<div style="left:374.00px;top:186.40px;width:4.03px;height:0.90px;background:#a0a0a0;"></div>
<div style="left:379.11px;top:186.40px;width:2.94px;height:0.90px;background:#a0a0a0;"></div>
<div style="left:374.00px;top:190.00px;width:3.90px;height:0.90px;background:#a0a0a0;"></div>
<div style="left:379.66px;top:190.00px;width:5.46px;height:0.90px;background:#a0a0a0;"></div>
<div style="left:422.00px;top:190.00px;width:3.07px;height:0.90px;background:#a8a8a8;"></div>
<div style="left:426.61px;top:190.00px;width:6.47px;height:0.90px;background:#a8a8a8;"></div>
<div style="left:434.74px;top:190.00px;width:3.33px;height:0.90px;background:#a8a8a8;"></div>
<div style="left:374.00px;top:193.60px;width:4.12px;height:0.90px;background:#a0a0a0;"></div>
<div style="left:379.31px;top:193.60px;width:5.95px;height:0.90px;background:#a0a0a0;"></div>
<div style="left:387.03px;top:193.60px;width:5.68px;height:0.90px;background:#a0a0a0;"></div>
<div style="left:394.92px;top:193.60px;width:5.32px;height:0.90px;background:#a0a0a0;"></div>
<div style="left:422.00px;top:193.60px;width:3.08px;height:0.90px;background:#a8a8a8;"></div>
<div style="left:427.36px;top:193.60px;width:4.45px;height:0.90px;background:#a8a8a8;"></div>
<div style="left:434.18px;top:193.60px;width:2.95px;height:0.90px;background:#a8a8a8;"></div>
<div style="left:438.42px;top:193.60px;width:1.04px;height:0.90px;background:#a8a8a8;"></div>
<div style="left:374.00px;top:197.20px;width:3.07px;height:0.90px;background:#a0a0a0;"></div>
<div style="left:378.61px;top:197.20px;width:6.47px;height:0.90px;background:#a0a0a0;"></div>
<div style="left:386.74px;top:197.20px;width:3.33px;height:0.90px;background:#a0a0a0;"></div>
<div style="left:392.13px;top:197.20px;width:2.81px;height:0.90px;background:#a0a0a0;"></div>
<div style="left:422.00px;top:197.20px;width:2.69px;height:0.90px;background:#a8a8a8;"></div>
<div style="left:426.61px;top:197.20px;width:2.25px;height:0.90px;background:#a8a8a8;"></div>
<div style="left:374.00px;top:200.80px;width:2.64px;height:0.90px;background:#a0a0a0;"></div>
<div style="left:378.06px;top:200.80px;width:6.16px;height:0.90px;background:#a0a0a0;"></div>
<div style="left:385.54px;top:200.80px;width:4.97px;height:0.90px;background:#a0a0a0;"></div>
<div style="left:391.90px;top:200.80px;width:5.41px;height:0.90px;background:#a0a0a0;"></div>
<div style="left:398.56px;top:200.80px;width:2.74px;height:0.90px;background:#a0a0a0;"></div>
<div style="left:402.44px;top:200.80px;width:2.15px;height:0.90px;background:#a0a0a0;"></div>
<div style="left:422.00px;top:200.80px;width:6.05px;height:0.90px;background:#a8a8a8;"></div>
<div style="left:429.12px;top:200.80px;width:4.84px;height:0.90px;background:#a8a8a8;"></div>
<div style="left:435.27px;top:200.80px;width:4.26px;height:0.90px;background:#a8a8a8;"></div>
<div style="left:374.00px;top:204.40px;width:4.02px;height:0.90px;background:#a0a0a0;"></div>
<div style="left:380.23px;top:204.40px;width:5.72px;height:0.90px;background:#a0a0a0;"></div>
<div style="left:387.41px;top:204.40px;width:6.55px;height:0.90px;background:#a0a0a0;"></div>
<div style="left:396.00px;top:204.40px;width:2.84px;height:0.90px;background:#a0a0a0;"></div>
<div style="left:399.91px;top:204.40px;width:3.54px;height:0.90px;background:#a0a0a0;"></div>
<div style="left:422.00px;top:204.40px;width:6.59px;height:0.90px;background:#a8a8a8;"></div>
<div style="left:429.75px;top:204.40px;width:1.30px;height:0.90px;background:#a8a8a8;"></div>
<div style="left:374.00px;top:208.00px;width:5.19px;height:0.90px;background:#a0a0a0;"></div>
<div style="left:381.31px;top:208.00px;width:3.17px;height:0.90px;background:#a0a0a0;"></div>
<div style="left:422.00px;top:208.00px;width:4.91px;height:0.90px;background:#a8a8a8;"></div>
<div style="left:374.00px;top:211.60px;width:6.99px;height:0.90px;background:#a0a0a0;"></div>
<div style="left:382.09px;top:211.60px;width:6.89px;height:0.90px;background:#a0a0a0;"></div>
<div style="left:422.00px;top:211.60px;width:3.97px;height:0.90px;background:#a8a8a8;"></div>
<div style="left:373.00px;top:222.50px;width:6.38px;height:0.90px;background:#989898;"></div>
<div style="left:380.75px;top:222.50px;width:2.22px;height:0.90px;background:#989898;"></div>
<div style="left:384.09px;top:222.50px;width:3.41px;height:0.90px;background:#989898;"></div>
<div style="left:389.08px;top:222.50px;width:3.68px;height:0.90px;background:#989898;"></div>
<div style="left:394.87px;top:222.50px;width:5.35px;height:0.90px;background:#989898;"></div>
<div style="left:401.77px;top:222.50px;width:6.47px;height:0.90px;background:#989898;"></div>
<div style="left:409.73px;top:222.50px;width:4.00px;height:0.90px;background:#989898;"></div>
<div style="left:415.53px;top:222.50px;width:3.65px;height:0.90px;background:#989898;"></div>
<div style="left:420.64px;top:222.50px;width:2.09px;height:0.90px;background:#989898;"></div>
<div style="left:424.00px;top:222.50px;width:2.33px;height:0.90px;background:#989898;"></div>
<div style="left:428.53px;top:222.50px;width:6.23px;height:0.90px;background:#989898;"></div>
<div style="left:436.56px;top:222.50px;width:6.96px;height:0.90px;background:#989898;"></div>
<div style="left:445.13px;top:222.50px;width:2.16px;height:0.90px;background:#989898;"></div>
<div style="left:449.01px;top:222.50px;width:2.99px;height:0.90px;background:#989898;"></div>
<div style="left:373.00px;top:227.00px;width:4.30px;height:0.90px;background:#989898;"></div>
<div style="left:378.65px;top:227.00px;width:6.33px;height:0.90px;background:#989898;"></div>
<div style="left:386.47px;top:227.00px;width:2.51px;height:0.90px;background:#989898;"></div>
<div style="left:390.27px;top:227.00px;width:4.93px;height:0.90px;background:#989898;"></div>
<div style="left:397.35px;top:227.00px;width:6.59px;height:0.90px;background:#989898;"></div>
<div style="left:406.02px;top:227.00px;width:3.19px;height:0.90px;background:#989898;"></div>
<div style="left:410.69px;top:227.00px;width:2.27px;height:0.90px;background:#989898;"></div>
<div style="left:414.58px;top:227.00px;width:4.89px;height:0.90px;background:#989898;"></div>
<div style="left:421.19px;top:227.00px;width:6.12px;height:0.90px;background:#989898;"></div>
<div style="left:428.77px;top:227.00px;width:4.67px;height:0.90px;background:#989898;"></div>
<div style="left:434.97px;top:227.00px;width:4.77px;height:0.90px;background:#989898;"></div>
<div style="left:441.71px;top:227.00px;width:2.14px;height:0.90px;background:#989898;"></div>
<div style="left:444.98px;top:227.00px;width:2.34px;height:0.90px;background:#989898;"></div>
<div style="left:448.47px;top:227.00px;width:5.55px;height:0.90px;background:#989898;"></div>
<div style="left:456.29px;top:227.00px;width:3.01px;height:0.90px;background:#989898;"></div>
<div style="left:461.00px;top:227.00px;width:2.47px;height:0.90px;background:#989898;"></div>
<div style="left:464.45px;top:227.00px;width:5.72px;height:0.90px;background:#989898;"></div>
<div style="left:471.19px;top:227.00px;width:5.82px;height:0.90px;background:#989898;"></div>
<div style="left:479.26px;top:227.00px;width:3.74px;height:0.90px;background:#989898;"></div>
<div style="left:373.00px;top:233.50px;width:2.53px;height:0.90px;background:#989898;"></div>
<div style="left:377.00px;top:233.50px;width:6.00px;height:0.90px;background:#989898;"></div>
<div style="left:384.67px;top:233.50px;width:4.48px;height:0.90px;background:#989898;"></div>
<div style="left:391.27px;top:233.50px;width:2.67px;height:0.90px;background:#989898;"></div>
<div style="left:395.38px;top:233.50px;width:3.05px;height:0.90px;background:#989898;"></div>
<div style="left:400.62px;top:233.50px;width:4.40px;height:0.90px;background:#989898;"></div>
<div style="left:406.90px;top:233.50px;width:3.50px;height:0.90px;background:#989898;"></div>
<div style="left:412.20px;top:233.50px;width:2.51px;height:0.90px;background:#989898;"></div>
<div style="left:417.03px;top:233.50px;width:3.67px;height:0.90px;background:#989898;"></div>
<div style="left:422.07px;top:233.50px;width:6.89px;height:0.90px;background:#989898;"></div>
<div style="left:430.66px;top:233.50px;width:4.97px;height:0.90px;background:#989898;"></div>
<div style="left:437.62px;top:233.50px;width:4.48px;height:0.90px;background:#989898;"></div>
<div style="left:444.46px;top:233.50px;width:3.46px;height:0.90px;background:#989898;"></div>
<div style="left:449.44px;top:233.50px;width:4.79px;height:0.90px;background:#989898;"></div>
<div style="left:455.70px;top:233.50px;width:3.34px;height:0.90px;background:#989898;"></div>
<div style="left:460.98px;top:233.50px;width:5.99px;height:0.90px;background:#989898;"></div>
<div style="left:469.36px;top:233.50px;width:6.24px;height:0.90px;background:#989898;"></div>
<div style="left:477.30px;top:233.50px;width:5.45px;height:0.90px;background:#989898;"></div>
<div style="left:483.85px;top:233.50px;width:3.03px;height:0.90px;background:#989898;"></div>
<div style="left:488.93px;top:233.50px;width:6.33px;height:0.90px;background:#989898;"></div>
<div style="left:496.71px;top:233.50px;width:6.47px;height:0.90px;background:#989898;"></div>
<div style="left:505.56px;top:233.50px;width:1.44px;height:0.90px;background:#989898;"></div>
<div style="left:373.00px;top:239.50px;width:5.33px;height:0.90px;background:#989898;"></div>
<div style="left:380.04px;top:239.50px;width:5.52px;height:0.90px;background:#989898;"></div>
<div style="left:387.53px;top:239.50px;width:6.42px;height:0.90px;background:#989898;"></div>
<div style="left:395.50px;top:239.50px;width:4.81px;height:0.90px;background:#989898;"></div>
<div style="left:401.75px;top:239.50px;width:4.29px;height:0.90px;background:#989898;"></div>
<div style="left:407.43px;top:239.50px;width:2.67px;height:0.90px;background:#989898;"></div>
<div style="left:411.36px;top:239.50px;width:4.45px;height:0.90px;background:#989898;"></div>
<div style="left:417.12px;top:239.50px;width:5.29px;height:0.90px;background:#989898;"></div>
<div style="left:424.51px;top:239.50px;width:2.52px;height:0.90px;background:#989898;"></div>
<div style="left:428.49px;top:239.50px;width:4.16px;height:0.90px;background:#989898;"></div>
<div style="left:434.28px;top:239.50px;width:3.70px;height:0.90px;background:#989898;"></div>
<div style="left:439.47px;top:239.50px;width:3.33px;height:0.90px;background:#989898;"></div>
<div style="left:443.89px;top:239.50px;width:3.11px;height:0.90px;background:#989898;"></div>
<div style="left:449.26px;top:239.50px;width:2.24px;height:0.90px;background:#989898;"></div>
<div style="left:453.38px;top:239.50px;width:4.94px;height:0.90px;background:#989898;"></div>
<div style="left:460.10px;top:239.50px;width:3.63px;height:0.90px;background:#989898;"></div>
<div style="left:465.20px;top:239.50px;width:5.17px;height:0.90px;background:#989898;"></div>
<div style="left:472.56px;top:239.50px;width:2.53px;height:0.90px;background:#989898;"></div>
<div style="left:373.00px;top:244.50px;width:6.01px;height:0.90px;background:#989898;"></div>
<div style="left:380.78px;top:244.50px;width:6.76px;height:0.90px;background:#989898;"></div>
<div style="left:389.61px;top:244.50px;width:5.98px;height:0.90px;background:#989898;"></div>
<div style="left:397.13px;top:244.50px;width:4.09px;height:0.90px;background:#989898;"></div>
<div style="left:402.96px;top:244.50px;width:6.80px;height:0.90px;background:#989898;"></div>
<div style="left:411.06px;top:244.50px;width:6.97px;height:0.90px;background:#989898;"></div>
<div style="left:420.26px;top:244.50px;width:2.40px;height:0.90px;background:#989898;"></div>
<div style="left:424.09px;top:244.50px;width:6.42px;height:0.90px;background:#989898;"></div>
<div style="left:432.60px;top:244.50px;width:6.99px;height:0.90px;background:#989898;"></div>
<div style="left:441.07px;top:244.50px;width:5.22px;height:0.90px;background:#989898;"></div>
<div style="left:447.54px;top:244.50px;width:2.31px;height:0.90px;background:#989898;"></div>
<div style="left:451.58px;top:244.50px;width:4.48px;height:0.90px;background:#989898;"></div>
<div style="left:457.55px;top:244.50px;width:6.34px;height:0.90px;background:#989898;"></div>
<div style="left:465.90px;top:244.50px;width:3.33px;height:0.90px;background:#989898;"></div>
<div style="left:470.84px;top:244.50px;width:4.12px;height:0.90px;background:#989898;"></div>
<div style="left:373.00px;top:250.00px;width:6.29px;height:0.90px;background:#989898;"></div>
<div style="left:381.00px;top:250.00px;width:6.55px;height:0.90px;background:#989898;"></div>
<div style="left:389.88px;top:250.00px;width:2.26px;height:0.90px;background:#989898;"></div>
<div style="left:394.04px;top:250.00px;width:6.17px;height:0.90px;background:#989898;"></div>
<div style="left:401.73px;top:250.00px;width:4.98px;height:0.90px;background:#989898;"></div>
<div style="left:408.21px;top:250.00px;width:5.82px;height:0.90px;background:#989898;"></div>
<div style="left:415.54px;top:250.00px;width:3.57px;height:0.90px;background:#989898;"></div>
<div style="left:421.49px;top:250.00px;width:3.68px;height:0.90px;background:#989898;"></div>
<div style="left:426.99px;top:250.00px;width:5.09px;height:0.90px;background:#989898;"></div>
<div style="left:434.40px;top:250.00px;width:3.71px;height:0.90px;background:#989898;"></div>
<div style="left:440.34px;top:250.00px;width:2.94px;height:0.90px;background:#989898;"></div>
<div style="left:444.41px;top:250.00px;width:4.68px;height:0.90px;background:#989898;"></div>
<div style="left:450.30px;top:250.00px;width:3.34px;height:0.90px;background:#989898;"></div>
<div style="left:454.92px;top:250.00px;width:6.68px;height:0.90px;background:#989898;"></div>
<div style="left:462.91px;top:250.00px;width:2.57px;height:0.90px;background:#989898;"></div>
<div style="left:466.71px;top:250.00px;width:3.20px;height:0.90px;background:#989898;"></div>
<div style="left:471.61px;top:250.00px;width:6.92px;height:0.90px;background:#989898;"></div>
<div style="left:480.04px;top:250.00px;width:4.80px;height:0.90px;background:#989898;"></div>
<div style="left:486.79px;top:250.00px;width:6.36px;height:0.90px;background:#989898;"></div>
<div style="left:494.80px;top:250.00px;width:6.73px;height:0.90px;background:#989898;"></div>
<div style="left:503.47px;top:250.00px;width:3.43px;height:0.90px;background:#989898;"></div>
<div style="left:508.69px;top:250.00px;width:4.43px;height:0.90px;background:#989898;"></div>
<div style="left:515.15px;top:250.00px;width:4.83px;height:0.90px;background:#989898;"></div>
<div style="left:521.38px;top:250.00px;width:3.62px;height:0.90px;background:#989898;"></div>
<div style="left:365.00px;top:124.00px;width:3.50px;height:3.50px;background:#d8d0a0;"></div>
<div style="left:364.20px;top:129.00px;width:5.00px;height:0.80px;background:#90a8d0;"></div>
<div style="left:365.00px;top:139.00px;width:3.50px;height:3.50px;background:#a0c0e8;"></div>
<div style="left:364.20px;top:144.00px;width:5.00px;height:0.80px;background:#90a8d0;"></div>
<div style="left:365.00px;top:154.00px;width:3.50px;height:3.50px;background:#e8e8e8;"></div>
<div style="left:364.20px;top:159.00px;width:5.00px;height:0.80px;background:#90a8d0;"></div>
<div style="left:365.00px;top:169.00px;width:3.50px;height:3.50px;background:#d8b860;"></div>
<div style="left:364.20px;top:174.00px;width:5.00px;height:0.80px;background:#90a8d0;"></div>
<div style="left:365.00px;top:184.00px;width:3.50px;height:3.50px;background:#80a8d8;"></div>
<div style="left:364.20px;top:189.00px;width:5.00px;height:0.80px;background:#90a8d0;"></div>
<div style="left:365.00px;top:199.00px;width:3.50px;height:3.50px;background:#c0d0e8;"></div>
<div style="left:364.20px;top:204.00px;width:5.00px;height:0.80px;background:#90a8d0;"></div>
<div style="left:365.00px;top:214.00px;width:3.50px;height:3.50px;background:#e0d890;"></div>
<div style="left:364.20px;top:219.00px;width:5.00px;height:0.80px;background:#90a8d0;"></div>
<div style="left:365.00px;top:229.00px;width:3.50px;height:3.50px;background:#90c090;"></div>
<div style="left:364.20px;top:234.00px;width:5.00px;height:0.80px;background:#90a8d0;"></div>
<div style="left:365.00px;top:244.00px;width:3.50px;height:3.50px;background:#c8c8e8;"></div>
<div style="left:364.20px;top:249.00px;width:5.00px;height:0.80px;background:#90a8d0;"></div>
<div style="left:365.00px;top:259.00px;width:3.50px;height:3.50px;background:#e0b080;"></div>
<div style="left:364.20px;top:264.00px;width:5.00px;height:0.80px;background:#90a8d0;"></div>
<div style="left:363.00px;top:273.50px;width:217.00px;height:9.50px;background:#d4d0c8;"></div>
<div style="left:363.00px;top:273.50px;width:217.00px;height:0.80px;background:#f8f8f8;"></div>
<div style="left:364.50px;top:275.80px;width:12.00px;height:5.50px;background:#e0ded6;border:0.6px solid #606060"></div>
<div style="left:366.00px;top:277.80px;width:1.41px;height:1.20px;background:#202020;"></div>
<div style="left:368.09px;top:277.80px;width:2.32px;height:1.20px;background:#202020;"></div>
<div style="left:371.54px;top:277.80px;width:2.27px;height:1.20px;background:#202020;"></div>
<div style="left:380.00px;top:276.80px;width:3.50px;height:3.50px;background:#5070b0;"></div>
<div style="left:385.00px;top:276.80px;width:3.50px;height:3.50px;background:#5070b0;"></div>
<div style="left:390.00px;top:276.80px;width:3.50px;height:3.50px;background:#5070b0;"></div>
<div style="left:398.00px;top:275.80px;width:30.00px;height:5.50px;background:#e8e6de;border-right:0.6px solid #808080;border-bottom:0.6px solid #808080"></div>
<div style="left:400.00px;top:277.80px;width:4.74px;height:1.20px;background:#303030;"></div>
<div style="left:406.78px;top:277.80px;width:5.74px;height:1.20px;background:#303030;"></div>
<div style="left:414.73px;top:277.80px;width:3.43px;height:1.20px;background:#303030;"></div>
<div style="left:420.51px;top:277.80px;width:4.83px;height:1.20px;background:#303030;"></div>
<div style="left:430.00px;top:275.80px;width:28.00px;height:5.50px;background:#e8e6de;border-right:0.6px solid #808080;border-bottom:0.6px solid #808080"></div>
<div style="left:432.00px;top:277.80px;width:2.37px;height:1.20px;background:#303030;"></div>
<div style="left:436.44px;top:277.80px;width:6.86px;height:1.20px;background:#303030;"></div>
<div style="left:444.86px;top:277.80px;width:6.72px;height:1.20px;background:#303030;"></div>
<div style="left:453.16px;top:277.80px;width:2.84px;height:1.20px;background:#303030;"></div>
<div style="left:460.00px;top:275.80px;width:28.00px;height:5.50px;background:#e8e6de;border-right:0.6px solid #808080;border-bottom:0.6px solid #808080"></div>
<div style="left:462.00px;top:277.80px;width:2.97px;height:1.20px;background:#303030;"></div>
<div style="left:467.09px;top:277.80px;width:3.86px;height:1.20px;background:#303030;"></div>
<div style="left:473.13px;top:277.80px;width:5.98px;height:1.20px;background:#303030;"></div>
<div style="left:480.89px;top:277.80px;width:4.79px;height:1.20px;background:#303030;"></div>
<div style="left:503.00px;top:275.80px;width:26.00px;height:5.50px;background:#e8e6de;border-right:0.6px solid #808080;border-bottom:0.6px solid #808080"></div>
<div style="left:505.00px;top:277.80px;width:5.86px;height:1.20px;background:#303030;"></div>
<div style="left:511.95px;top:277.80px;width:3.33px;height:1.20px;background:#303030;"></div>
<div style="left:517.01px;top:277.80px;width:2.27px;height:1.20px;background:#303030;"></div>
<div style="left:521.28px;top:277.80px;width:2.08px;height:1.20px;background:#303030;"></div>
<div style="left:524.59px;top:277.80px;width:2.41px;height:1.20px;background:#303030;"></div>
<div style="left:546.00px;top:275.50px;width:33.00px;height:6.00px;background:#d4d0c8;border:0.6px solid #a0a0a0"></div>
<div style="left:548.00px;top:277.00px;width:3.00px;height:3.00px;background:#404060;"></div>
<div style="left:553.00px;top:277.00px;width:3.00px;height:3.00px;background:#404060;"></div>
<div style="left:558.00px;top:277.00px;width:3.00px;height:3.00px;background:#404060;"></div>
<div style="left:563.00px;top:277.00px;width:3.00px;height:3.00px;background:#404060;"></div>
<div style="left:568.00px;top:277.00px;width:3.00px;height:3.00px;background:#404060;"></div>
<div style="left:573.00px;top:277.00px;width:3.00px;height:3.00px;background:#404060;"></div>
<div style="left:139.00px;top:302.00px;width:219.00px;height:163.00px;background:#3467a8;"></div>
<div style="left:144.30px;top:303.99px;width:6.00px;height:5.47px;background:#e8d890;"></div>
<div style="left:145.30px;top:309.45px;width:4.00px;height:1.19px;background:#d0d8e8;"></div>
<div style="left:141.80px;top:312.54px;width:2.69px;height:0.89px;background:#b8c8e8;"></div>
<div style="left:146.03px;top:312.54px;width:1.84px;height:0.89px;background:#b8c8e8;"></div>
<div style="left:148.87px;top:312.54px;width:2.02px;height:0.89px;background:#b8c8e8;"></div>
<div style="left:144.30px;top:314.72px;width:2.00px;height:0.89px;background:#b8c8e8;"></div>
<div style="left:147.30px;top:314.72px;width:2.27px;height:0.89px;background:#b8c8e8;"></div>
<div style="left:159.90px;top:304.98px;width:7.00px;height:4.97px;background:#f0e098;"></div>
<div style="left:159.90px;top:304.19px;width:3.00px;height:1.19px;background:#f0e098;"></div>
<div style="left:157.90px;top:312.54px;width:1.27px;height:0.89px;background:#b8c8e8;"></div>
<div style="left:160.80px;top:312.54px;width:2.53px;height:0.89px;background:#b8c8e8;"></div>
<div style="left:164.33px;top:312.54px;width:1.99px;height:0.89px;background:#b8c8e8;"></div>
<div style="left:167.52px;top:312.54px;width:1.38px;height:0.89px;background:#b8c8e8;"></div>
<div style="left:160.40px;top:314.72px;width:1.49px;height:0.89px;background:#b8c8e8;"></div>
<div style="left:163.15px;top:314.72px;width:1.32px;height:0.89px;background:#b8c8e8;"></div>
<div style="left:176.00px;top:304.98px;width:7.00px;height:4.97px;background:#d8e0f0;"></div>
<div style="left:176.00px;top:304.19px;width:3.00px;height:1.19px;background:#d8e0f0;"></div>
<div style="left:174.00px;top:312.54px;width:2.91px;height:0.89px;background:#b8c8e8;"></div>
<div style="left:178.66px;top:312.54px;width:1.11px;height:0.89px;background:#b8c8e8;"></div>
<div style="left:180.58px;top:312.54px;width:2.67px;height:0.89px;background:#b8c8e8;"></div>
<div style="left:176.50px;top:314.72px;width:2.96px;height:0.89px;background:#b8c8e8;"></div>
<div style="left:180.24px;top:314.72px;width:2.26px;height:0.89px;background:#b8c8e8;"></div>
<div style="left:143.80px;top:320.39px;width:7.00px;height:5.47px;background:#c8d8f0;border-radius:40%"></div>
<div style="left:141.80px;top:328.44px;width:2.14px;height:0.89px;background:#b8c8e8;"></div>
<div style="left:145.13px;top:328.44px;width:2.16px;height:0.89px;background:#b8c8e8;"></div>
<div style="left:148.22px;top:328.44px;width:2.63px;height:0.89px;background:#b8c8e8;"></div>
<div style="left:159.90px;top:320.88px;width:7.00px;height:4.97px;background:#f0e098;"></div>
<div style="left:159.90px;top:320.09px;width:3.00px;height:1.19px;background:#f0e098;"></div>
<div style="left:157.90px;top:328.44px;width:1.90px;height:0.89px;background:#b8c8e8;"></div>
<div style="left:161.13px;top:328.44px;width:2.85px;height:0.89px;background:#b8c8e8;"></div>
<div style="left:165.20px;top:328.44px;width:2.02px;height:0.89px;background:#b8c8e8;"></div>
<div style="left:160.40px;top:330.62px;width:1.99px;height:0.89px;background:#b8c8e8;"></div>
<div style="left:163.71px;top:330.62px;width:2.62px;height:0.89px;background:#b8c8e8;"></div>
<div style="left:176.00px;top:320.39px;width:7.00px;height:5.47px;background:#c0c8d0;border-radius:40%"></div>
<div style="left:174.00px;top:328.44px;width:1.95px;height:0.89px;background:#b8c8e8;"></div>
<div style="left:177.38px;top:328.44px;width:2.33px;height:0.89px;background:#b8c8e8;"></div>
<div style="left:180.59px;top:328.44px;width:1.02px;height:0.89px;background:#b8c8e8;"></div>
<div style="left:182.73px;top:328.44px;width:1.55px;height:0.89px;background:#b8c8e8;"></div>
<div style="left:143.80px;top:336.79px;width:7.00px;height:4.97px;background:#60a8c0;"></div>
<div style="left:143.80px;top:335.99px;width:3.00px;height:1.19px;background:#60a8c0;"></div>
<div style="left:141.80px;top:344.34px;width:2.81px;height:0.89px;background:#b8c8e8;"></div>
<div style="left:146.07px;top:344.34px;width:2.53px;height:0.89px;background:#b8c8e8;"></div>
<div style="left:150.30px;top:344.34px;width:1.52px;height:0.89px;background:#b8c8e8;"></div>
<div style="left:159.90px;top:336.79px;width:7.00px;height:4.97px;background:#303860;"></div>
<div style="left:159.90px;top:335.99px;width:3.00px;height:1.19px;background:#303860;"></div>
<div style="left:157.90px;top:344.34px;width:1.33px;height:0.89px;background:#b8c8e8;"></div>
<div style="left:160.69px;top:344.34px;width:2.27px;height:0.89px;background:#b8c8e8;"></div>
<div style="left:164.20px;top:344.34px;width:1.43px;height:0.89px;background:#b8c8e8;"></div>
<div style="left:167.21px;top:344.34px;width:1.69px;height:0.89px;background:#b8c8e8;"></div>
<div style="left:176.50px;top:335.79px;width:6.00px;height:5.47px;background:#283050;"></div>
<div style="left:177.50px;top:341.26px;width:4.00px;height:1.19px;background:#d0d8e8;"></div>
<div style="left:174.00px;top:344.34px;width:2.92px;height:0.89px;background:#b8c8e8;"></div>
<div style="left:177.79px;top:344.34px;width:1.05px;height:0.89px;background:#b8c8e8;"></div>
<div style="left:180.63px;top:344.34px;width:1.37px;height:0.89px;background:#b8c8e8;"></div>
<div style="left:182.85px;top:344.34px;width:2.15px;height:0.89px;background:#b8c8e8;"></div>
<div style="left:176.50px;top:346.53px;width:1.15px;height:0.89px;background:#b8c8e8;"></div>
<div style="left:179.01px;top:346.53px;width:2.98px;height:0.89px;background:#b8c8e8;"></div>
<div style="left:143.80px;top:352.69px;width:7.00px;height:4.97px;background:#d0e0f8;"></div>
<div style="left:143.80px;top:351.89px;width:3.00px;height:1.19px;background:#d0e0f8;"></div>
<div style="left:141.80px;top:360.24px;width:2.08px;height:0.89px;background:#b8c8e8;"></div>
<div style="left:144.91px;top:360.24px;width:1.06px;height:0.89px;background:#b8c8e8;"></div>
<div style="left:147.40px;top:360.24px;width:1.42px;height:0.89px;background:#b8c8e8;"></div>
<div style="left:149.81px;top:360.24px;width:1.79px;height:0.89px;background:#b8c8e8;"></div>
<div style="left:160.40px;top:351.70px;width:6.00px;height:5.47px;background:#d83820;"></div>
<div style="left:161.40px;top:357.16px;width:4.00px;height:1.19px;background:#d0d8e8;"></div>
<div style="left:157.90px;top:360.24px;width:1.02px;height:0.89px;background:#b8c8e8;"></div>
<div style="left:159.77px;top:360.24px;width:1.79px;height:0.89px;background:#b8c8e8;"></div>
<div style="left:163.01px;top:360.24px;width:1.28px;height:0.89px;background:#b8c8e8;"></div>
<div style="left:165.13px;top:360.24px;width:1.46px;height:0.89px;background:#b8c8e8;"></div>
<div style="left:160.40px;top:362.43px;width:2.01px;height:0.89px;background:#b8c8e8;"></div>
<div style="left:163.62px;top:362.43px;width:2.12px;height:0.89px;background:#b8c8e8;"></div>
<div style="left:176.50px;top:351.70px;width:6.00px;height:5.47px;background:#c0a030;"></div>
<div style="left:177.50px;top:357.16px;width:4.00px;height:1.19px;background:#d0d8e8;"></div>
<div style="left:174.00px;top:360.24px;width:1.15px;height:0.89px;background:#b8c8e8;"></div>
<div style="left:176.11px;top:360.24px;width:1.61px;height:0.89px;background:#b8c8e8;"></div>
<div style="left:179.40px;top:360.24px;width:1.99px;height:0.89px;background:#b8c8e8;"></div>
<div style="left:182.89px;top:360.24px;width:1.20px;height:0.89px;background:#b8c8e8;"></div>
<div style="left:176.50px;top:362.43px;width:1.29px;height:0.89px;background:#b8c8e8;"></div>
<div style="left:179.04px;top:362.43px;width:2.01px;height:0.89px;background:#b8c8e8;"></div>
<div style="left:143.80px;top:368.09px;width:7.00px;height:5.47px;background:#3080e0;border-radius:40%"></div>
<div style="left:141.80px;top:376.15px;width:1.92px;height:0.89px;background:#b8c8e8;"></div>
<div style="left:145.39px;top:376.15px;width:1.06px;height:0.89px;background:#b8c8e8;"></div>
<div style="left:147.47px;top:376.15px;width:2.92px;height:0.89px;background:#b8c8e8;"></div>
<div style="left:151.84px;top:376.15px;width:0.96px;height:0.89px;background:#b8c8e8;"></div>
<div style="left:159.90px;top:368.09px;width:7.00px;height:5.47px;background:#e0e8ff;border-radius:40%"></div>
<div style="left:157.90px;top:376.15px;width:1.76px;height:0.89px;background:#b8c8e8;"></div>
<div style="left:160.63px;top:376.15px;width:1.33px;height:0.89px;background:#b8c8e8;"></div>
<div style="left:163.67px;top:376.15px;width:2.16px;height:0.89px;background:#b8c8e8;"></div>
<div style="left:167.29px;top:376.15px;width:1.61px;height:0.89px;background:#b8c8e8;"></div>
<div style="left:160.40px;top:378.33px;width:1.17px;height:0.89px;background:#b8c8e8;"></div>
<div style="left:162.47px;top:378.33px;width:2.37px;height:0.89px;background:#b8c8e8;"></div>
<div style="left:176.00px;top:368.59px;width:7.00px;height:4.97px;background:#283050;"></div>
<div style="left:176.00px;top:367.80px;width:3.00px;height:1.19px;background:#283050;"></div>
<div style="left:174.00px;top:376.15px;width:2.28px;height:0.89px;background:#b8c8e8;"></div>
<div style="left:177.03px;top:376.15px;width:1.55px;height:0.89px;background:#b8c8e8;"></div>
<div style="left:179.54px;top:376.15px;width:2.47px;height:0.89px;background:#b8c8e8;"></div>
<div style="left:183.46px;top:376.15px;width:1.54px;height:0.89px;background:#b8c8e8;"></div>
<div style="left:176.50px;top:378.33px;width:1.84px;height:0.89px;background:#b8c8e8;"></div>
<div style="left:179.67px;top:378.33px;width:2.12px;height:0.89px;background:#b8c8e8;"></div>
<div style="left:143.80px;top:384.49px;width:7.00px;height:4.97px;background:#e07070;"></div>
<div style="left:143.80px;top:383.70px;width:3.00px;height:1.19px;background:#e07070;"></div>
<div style="left:141.80px;top:392.05px;width:2.00px;height:0.89px;background:#b8c8e8;"></div>
<div style="left:144.80px;top:392.05px;width:2.27px;height:0.89px;background:#b8c8e8;"></div>
<div style="left:148.06px;top:392.05px;width:1.95px;height:0.89px;background:#b8c8e8;"></div>
<div style="left:151.77px;top:392.05px;width:1.03px;height:0.89px;background:#b8c8e8;"></div>
<div style="left:159.90px;top:384.00px;width:7.00px;height:5.47px;background:#a0a040;border-radius:40%"></div>
<div style="left:157.90px;top:392.05px;width:1.49px;height:0.89px;background:#b8c8e8;"></div>
<div style="left:160.65px;top:392.05px;width:1.32px;height:0.89px;background:#b8c8e8;"></div>
<div style="left:163.58px;top:392.05px;width:1.46px;height:0.89px;background:#b8c8e8;"></div>
<div style="left:166.36px;top:392.05px;width:2.54px;height:0.89px;background:#b8c8e8;"></div>
<div style="left:176.50px;top:383.50px;width:6.00px;height:5.47px;background:#f0f0f0;"></div>
<div style="left:177.50px;top:388.97px;width:4.00px;height:1.19px;background:#d0d8e8;"></div>
<div style="left:174.00px;top:392.05px;width:2.96px;height:0.89px;background:#b8c8e8;"></div>
<div style="left:177.74px;top:392.05px;width:2.45px;height:0.89px;background:#b8c8e8;"></div>
<div style="left:181.43px;top:392.05px;width:2.88px;height:0.89px;background:#b8c8e8;"></div>
<div style="left:143.80px;top:399.90px;width:7.00px;height:5.47px;background:#d04030;border-radius:40%"></div>
<div style="left:141.80px;top:407.95px;width:1.62px;height:0.89px;background:#b8c8e8;"></div>
<div style="left:144.76px;top:407.95px;width:1.53px;height:0.89px;background:#b8c8e8;"></div>
<div style="left:147.88px;top:407.95px;width:1.93px;height:0.89px;background:#b8c8e8;"></div>
<div style="left:150.90px;top:407.95px;width:1.90px;height:0.89px;background:#b8c8e8;"></div>
<div style="left:144.30px;top:410.14px;width:2.87px;height:0.89px;background:#b8c8e8;"></div>
<div style="left:148.31px;top:410.14px;width:1.99px;height:0.89px;background:#b8c8e8;"></div>
<div style="left:159.90px;top:399.90px;width:7.00px;height:5.47px;background:#a8a8a0;border-radius:40%"></div>
<div style="left:157.90px;top:407.95px;width:1.99px;height:0.89px;background:#b8c8e8;"></div>
<div style="left:161.21px;top:407.95px;width:2.62px;height:0.89px;background:#b8c8e8;"></div>
<div style="left:164.90px;top:407.95px;width:1.64px;height:0.89px;background:#b8c8e8;"></div>
<div style="left:168.01px;top:407.95px;width:0.89px;height:0.89px;background:#b8c8e8;"></div>
<div style="left:176.00px;top:399.90px;width:7.00px;height:5.47px;background:#f0e098;border-radius:40%"></div>
<div style="left:174.00px;top:407.95px;width:2.86px;height:0.89px;background:#b8c8e8;"></div>
<div style="left:177.76px;top:407.95px;width:2.94px;height:0.89px;background:#b8c8e8;"></div>
<div style="left:181.68px;top:407.95px;width:1.93px;height:0.89px;background:#b8c8e8;"></div>
<div style="left:176.50px;top:410.14px;width:1.96px;height:0.89px;background:#b8c8e8;"></div>
<div style="left:179.90px;top:410.14px;width:2.24px;height:0.89px;background:#b8c8e8;"></div>
<div style="left:143.80px;top:416.30px;width:7.00px;height:4.97px;background:#d03020;"></div>
<div style="left:143.80px;top:415.50px;width:3.00px;height:1.19px;background:#d03020;"></div>
<div style="left:141.80px;top:423.85px;width:2.82px;height:0.89px;background:#b8c8e8;"></div>
<div style="left:145.66px;top:423.85px;width:1.92px;height:0.89px;background:#b8c8e8;"></div>
<div style="left:148.44px;top:423.85px;width:2.99px;height:0.89px;background:#b8c8e8;"></div>
<div style="left:144.30px;top:426.04px;width:2.03px;height:0.89px;background:#b8c8e8;"></div>
<div style="left:147.25px;top:426.04px;width:2.91px;height:0.89px;background:#b8c8e8;"></div>
<div style="left:160.40px;top:415.30px;width:6.00px;height:5.47px;background:#8090a8;"></div>
<div style="left:161.40px;top:420.77px;width:4.00px;height:1.19px;background:#d0d8e8;"></div>
<div style="left:157.90px;top:423.85px;width:1.65px;height:0.89px;background:#b8c8e8;"></div>
<div style="left:160.94px;top:423.85px;width:1.02px;height:0.89px;background:#b8c8e8;"></div>
<div style="left:163.74px;top:423.85px;width:2.64px;height:0.89px;background:#b8c8e8;"></div>
<div style="left:176.00px;top:415.80px;width:7.00px;height:5.47px;background:#f0e098;border-radius:40%"></div>
<div style="left:174.00px;top:423.85px;width:1.15px;height:0.89px;background:#b8c8e8;"></div>
<div style="left:176.51px;top:423.85px;width:2.98px;height:0.89px;background:#b8c8e8;"></div>
<div style="left:180.58px;top:423.85px;width:2.09px;height:0.89px;background:#b8c8e8;"></div>
<div style="left:183.79px;top:423.85px;width:1.21px;height:0.89px;background:#b8c8e8;"></div>
<div style="left:144.30px;top:431.21px;width:6.00px;height:5.47px;background:#e06030;"></div>
<div style="left:145.30px;top:436.67px;width:4.00px;height:1.19px;background:#d0d8e8;"></div>
<div style="left:141.80px;top:439.75px;width:1.54px;height:0.89px;background:#b8c8e8;"></div>
<div style="left:144.65px;top:439.75px;width:2.42px;height:0.89px;background:#b8c8e8;"></div>
<div style="left:148.82px;top:439.75px;width:1.74px;height:0.89px;background:#b8c8e8;"></div>
<div style="left:151.85px;top:439.75px;width:0.95px;height:0.89px;background:#b8c8e8;"></div>
<div style="left:144.30px;top:441.94px;width:2.04px;height:0.89px;background:#b8c8e8;"></div>
<div style="left:147.35px;top:441.94px;width:2.48px;height:0.89px;background:#b8c8e8;"></div>
<div style="left:159.90px;top:431.70px;width:7.00px;height:5.47px;background:#e05020;border-radius:40%"></div>
<div style="left:157.90px;top:439.75px;width:2.01px;height:0.89px;background:#b8c8e8;"></div>
<div style="left:161.12px;top:439.75px;width:2.12px;height:0.89px;background:#b8c8e8;"></div>
<div style="left:164.37px;top:439.75px;width:2.67px;height:0.89px;background:#b8c8e8;"></div>
<div style="left:167.93px;top:439.75px;width:0.97px;height:0.89px;background:#b8c8e8;"></div>
<div style="left:353.00px;top:304.98px;width:3.00px;height:3.98px;background:#e0e8f8;"></div>
<div style="left:139.00px;top:458.04px;width:219.00px;height:6.96px;background:#d4d0c8;"></div>
<div style="left:139.00px;top:458.04px;width:219.00px;height:0.80px;background:#ffffff;"></div>
<div style="left:141.00px;top:460.03px;width:3.00px;height:2.98px;background:#303030;"></div>
<div style="left:145.00px;top:460.03px;width:3.00px;height:2.98px;background:#505050;"></div>
<div style="left:149.00px;top:460.03px;width:3.00px;height:2.98px;background:#303030;"></div>
<div style="left:154.00px;top:460.03px;width:3.00px;height:2.98px;background:#404040;"></div>
<div style="left:160.00px;top:460.03px;width:3.00px;height:2.98px;background:#606060;"></div>
<div style="left:165.00px;top:460.03px;width:3.00px;height:2.98px;background:#406080;"></div>
<div style="left:170.00px;top:460.03px;width:3.00px;height:2.98px;background:#505050;"></div>
<div style="left:175.00px;top:460.03px;width:3.00px;height:2.98px;background:#604040;"></div>
<div style="left:180.00px;top:460.03px;width:3.00px;height:2.98px;background:#505050;"></div>
<div style="left:321.00px;top:460.03px;width:3.00px;height:2.98px;background:#303070;"></div>
<div style="left:326.00px;top:460.03px;width:3.00px;height:2.98px;background:#505050;"></div>
<div style="left:331.00px;top:460.03px;width:3.00px;height:2.98px;background:#605030;"></div>
<div style="left:336.00px;top:460.03px;width:3.00px;height:2.98px;background:#404040;"></div>
<div style="left:342.00px;top:460.03px;width:3.00px;height:2.98px;background:#505050;"></div>
<div style="left:348.00px;top:460.03px;width:3.00px;height:2.98px;background:#404040;"></div>
<div style="left:352.00px;top:460.03px;width:3.00px;height:2.98px;background:#303030;"></div>
<div style="left:363.00px;top:302.00px;width:217.00px;height:163.00px;background:#f0efe8;"></div>
<div style="left:363.00px;top:303.19px;width:217.00px;height:3.98px;background:linear-gradient(90deg,#3a6cd0,#6a98e0 30%,#98bcec 60%,#b0ccf0);"></div>
<div style="left:363.00px;top:307.17px;width:217.00px;height:16.40px;background:#f1f0ea;"></div>
<div style="left:366.96px;top:304.58px;width:2.04px;height:0.99px;background:#f0f4ff;"></div>
<div style="left:370.12px;top:304.58px;width:3.93px;height:0.99px;background:#f0f4ff;"></div>
<div style="left:375.97px;top:304.58px;width:2.67px;height:0.99px;background:#f0f4ff;"></div>
<div style="left:379.75px;top:304.58px;width:3.13px;height:0.99px;background:#f0f4ff;"></div>
<div style="left:384.92px;top:304.58px;width:2.71px;height:0.99px;background:#f0f4ff;"></div>
<div style="left:389.64px;top:304.58px;width:5.26px;height:0.99px;background:#f0f4ff;"></div>
<div style="left:396.04px;top:304.58px;width:4.64px;height:0.99px;background:#f0f4ff;"></div>
<div style="left:402.27px;top:304.58px;width:4.03px;height:0.99px;background:#f0f4ff;"></div>
<div style="left:408.67px;top:304.58px;width:2.44px;height:0.99px;background:#f0f4ff;"></div>
<div style="left:412.09px;top:304.58px;width:6.64px;height:0.99px;background:#f0f4ff;"></div>
<div style="left:420.26px;top:304.58px;width:2.97px;height:0.99px;background:#f0f4ff;"></div>
<div style="left:424.64px;top:304.58px;width:3.79px;height:0.99px;background:#f0f4ff;"></div>
<div style="left:430.75px;top:304.58px;width:1.61px;height:0.99px;background:#f0f4ff;"></div>
<div style="left:567.12px;top:303.79px;width:3.47px;height:2.98px;background:#d8e8ff;"></div>
<div style="left:571.58px;top:303.79px;width:3.47px;height:2.98px;background:#d8e8ff;"></div>
<div style="left:575.54px;top:303.79px;width:3.47px;height:2.98px;background:#e8a090;"></div>
<div style="left:365.97px;top:308.56px;width:2.29px;height:0.99px;background:#707070;"></div>
<div style="left:371.01px;top:308.56px;width:3.18px;height:0.99px;background:#707070;"></div>
<div style="left:379.08px;top:308.56px;width:3.95px;height:0.99px;background:#707070;"></div>
<div style="left:387.36px;top:308.56px;width:2.38px;height:0.99px;background:#707070;"></div>
<div style="left:393.41px;top:308.56px;width:5.32px;height:0.99px;background:#707070;"></div>
<div style="left:402.44px;top:308.56px;width:5.73px;height:0.99px;background:#707070;"></div>
<div style="left:413.00px;top:308.56px;width:3.45px;height:0.99px;background:#707070;"></div>
<div style="left:418.54px;top:308.56px;width:4.98px;height:0.99px;background:#707070;"></div>
<div style="left:425.99px;top:308.56px;width:2.02px;height:0.99px;background:#707070;"></div>
<div style="left:432.37px;top:308.56px;width:5.32px;height:0.99px;background:#707070;"></div>
<div style="left:442.38px;top:308.56px;width:5.76px;height:0.99px;background:#707070;"></div>
<div style="left:450.85px;top:308.56px;width:2.30px;height:0.99px;background:#707070;"></div>
<div style="left:455.62px;top:308.56px;width:5.86px;height:0.99px;background:#707070;"></div>
<div style="left:365.97px;top:312.54px;width:2.69px;height:1.79px;background:#8a8a8a;"></div>
<div style="left:372.13px;top:312.54px;width:3.42px;height:1.79px;background:#8a8a8a;"></div>
<div style="left:378.08px;top:312.54px;width:2.93px;height:1.79px;background:#8a8a8a;"></div>
<div style="left:385.17px;top:312.54px;width:3.69px;height:1.79px;background:#8a8a8a;"></div>
<div style="left:391.15px;top:312.54px;width:2.93px;height:1.79px;background:#8a8a8a;"></div>
<div style="left:397.51px;top:312.54px;width:2.49px;height:1.79px;background:#8a8a8a;"></div>
<div style="left:404.37px;top:312.54px;width:2.56px;height:1.79px;background:#8a8a8a;"></div>
<div style="left:409.90px;top:312.54px;width:3.80px;height:1.79px;background:#8a8a8a;"></div>
<div style="left:417.18px;top:312.54px;width:1.89px;height:1.79px;background:#8a8a8a;"></div>
<div style="left:421.68px;top:312.54px;width:2.47px;height:1.79px;background:#8a8a8a;"></div>
<div style="left:426.07px;top:312.54px;width:2.80px;height:1.79px;background:#8a8a8a;"></div>
<div style="left:432.62px;top:312.54px;width:2.26px;height:1.79px;background:#8a8a8a;"></div>
<div style="left:438.93px;top:312.54px;width:3.75px;height:1.79px;background:#8a8a8a;"></div>
<div style="left:445.95px;top:312.54px;width:3.02px;height:1.79px;background:#8a8a8a;"></div>
<div style="left:451.06px;top:312.54px;width:1.16px;height:1.79px;background:#8a8a8a;"></div>
<div style="left:456.62px;top:312.54px;width:1.84px;height:1.79px;background:#8a8a8a;"></div>
<div style="left:460.81px;top:312.54px;width:3.66px;height:1.79px;background:#8a8a8a;"></div>
<div style="left:468.26px;top:312.54px;width:1.36px;height:1.79px;background:#8a8a8a;"></div>
<div style="left:472.26px;top:312.54px;width:1.71px;height:1.79px;background:#8a8a8a;"></div>
<div style="left:476.48px;top:312.54px;width:1.01px;height:1.79px;background:#8a8a8a;"></div>
<div style="left:480.68px;top:312.54px;width:1.90px;height:1.79px;background:#8a8a8a;"></div>
<div style="left:485.42px;top:312.54px;width:1.54px;height:1.79px;background:#8a8a8a;"></div>
<div style="left:489.04px;top:312.54px;width:1.09px;height:1.79px;background:#8a8a8a;"></div>
<div style="left:494.24px;top:312.54px;width:3.21px;height:1.79px;background:#8a8a8a;"></div>
<div style="left:500.74px;top:312.54px;width:1.36px;height:1.79px;background:#8a8a8a;"></div>
<div style="left:504.28px;top:312.54px;width:1.35px;height:1.79px;background:#8a8a8a;"></div>
<div style="left:508.25px;top:312.54px;width:1.16px;height:1.79px;background:#8a8a8a;"></div>
<div style="left:511.94px;top:312.54px;width:1.59px;height:1.79px;background:#8a8a8a;"></div>
<div style="left:515.83px;top:312.54px;width:2.93px;height:1.79px;background:#8a8a8a;"></div>
<div style="left:521.77px;top:312.54px;width:2.40px;height:1.79px;background:#8a8a8a;"></div>
<div style="left:526.91px;top:312.54px;width:2.59px;height:1.79px;background:#8a8a8a;"></div>
<div style="left:533.39px;top:312.54px;width:1.91px;height:1.79px;background:#8a8a8a;"></div>
<div style="left:537.27px;top:312.54px;width:2.42px;height:1.79px;background:#8a8a8a;"></div>
<div style="left:542.49px;top:312.54px;width:3.31px;height:1.79px;background:#8a8a8a;"></div>
<div style="left:547.88px;top:312.54px;width:3.59px;height:1.79px;background:#8a8a8a;"></div>
<div style="left:553.29px;top:312.54px;width:2.60px;height:1.79px;background:#8a8a8a;"></div>
<div style="left:558.86px;top:312.54px;width:1.93px;height:1.79px;background:#8a8a8a;"></div>
<div style="left:564.95px;top:312.54px;width:3.08px;height:1.79px;background:#8a8a8a;"></div>
<div style="left:570.25px;top:312.54px;width:2.46px;height:1.79px;background:#8a8a8a;"></div>
<div style="left:365.97px;top:316.51px;width:2.56px;height:1.79px;background:#989898;"></div>
<div style="left:371.89px;top:316.51px;width:3.50px;height:1.79px;background:#989898;"></div>
<div style="left:379.57px;top:316.51px;width:3.61px;height:1.79px;background:#989898;"></div>
<div style="left:385.94px;top:316.51px;width:3.81px;height:1.79px;background:#989898;"></div>
<div style="left:392.67px;top:316.51px;width:1.90px;height:1.79px;background:#989898;"></div>
<div style="left:396.61px;top:316.51px;width:2.51px;height:1.79px;background:#989898;"></div>
<div style="left:401.32px;top:316.51px;width:1.81px;height:1.79px;background:#989898;"></div>
<div style="left:406.54px;top:316.51px;width:3.30px;height:1.79px;background:#989898;"></div>
<div style="left:413.64px;top:316.51px;width:1.25px;height:1.79px;background:#989898;"></div>
<div style="left:416.84px;top:316.51px;width:1.75px;height:1.79px;background:#989898;"></div>
<div style="left:421.84px;top:316.51px;width:3.48px;height:1.79px;background:#989898;"></div>
<div style="left:429.25px;top:316.51px;width:3.77px;height:1.79px;background:#989898;"></div>
<div style="left:436.38px;top:316.51px;width:2.88px;height:1.79px;background:#989898;"></div>
<div style="left:441.83px;top:316.51px;width:1.92px;height:1.79px;background:#989898;"></div>
<div style="left:446.09px;top:316.51px;width:2.58px;height:1.79px;background:#989898;"></div>
<div style="left:452.08px;top:316.51px;width:2.69px;height:1.79px;background:#989898;"></div>
<div style="left:457.60px;top:316.51px;width:2.25px;height:1.79px;background:#989898;"></div>
<div style="left:462.30px;top:316.51px;width:3.41px;height:1.79px;background:#989898;"></div>
<div style="left:469.05px;top:316.51px;width:3.22px;height:1.79px;background:#989898;"></div>
<div style="left:476.23px;top:316.51px;width:1.83px;height:1.79px;background:#989898;"></div>
<div style="left:480.15px;top:316.51px;width:1.83px;height:1.79px;background:#989898;"></div>
<div style="left:486.19px;top:316.51px;width:3.34px;height:1.79px;background:#989898;"></div>
<div style="left:492.40px;top:316.51px;width:3.30px;height:1.79px;background:#989898;"></div>
<div style="left:498.40px;top:316.51px;width:3.56px;height:1.79px;background:#989898;"></div>
<div style="left:503.99px;top:316.51px;width:3.19px;height:1.79px;background:#989898;"></div>
<div style="left:511.59px;top:316.51px;width:2.24px;height:1.79px;background:#989898;"></div>
<div style="left:516.85px;top:316.51px;width:1.38px;height:1.79px;background:#989898;"></div>
<div style="left:520.75px;top:316.51px;width:1.69px;height:1.79px;background:#989898;"></div>
<div style="left:525.01px;top:316.51px;width:1.19px;height:1.79px;background:#989898;"></div>
<div style="left:528.79px;top:316.51px;width:1.30px;height:1.79px;background:#989898;"></div>
<div style="left:533.28px;top:316.51px;width:2.20px;height:1.79px;background:#989898;"></div>
<div style="left:537.87px;top:316.51px;width:3.79px;height:1.79px;background:#989898;"></div>
<div style="left:544.27px;top:316.51px;width:2.57px;height:1.79px;background:#989898;"></div>
<div style="left:551.02px;top:316.51px;width:3.25px;height:1.79px;background:#989898;"></div>
<div style="left:558.63px;top:316.51px;width:2.80px;height:1.79px;background:#989898;"></div>
<div style="left:565.55px;top:316.51px;width:1.18px;height:1.79px;background:#989898;"></div>
<div style="left:570.48px;top:316.51px;width:1.99px;height:1.79px;background:#989898;"></div>
<div style="left:365.97px;top:320.49px;width:4.16px;height:1.19px;background:#808080;"></div>
<div style="left:373.92px;top:320.49px;width:4.94px;height:1.19px;background:#808080;"></div>
<div style="left:382.96px;top:320.49px;width:3.11px;height:1.19px;background:#808080;"></div>
<div style="left:390.44px;top:320.49px;width:4.23px;height:1.19px;background:#808080;"></div>
<div style="left:398.45px;top:320.49px;width:4.97px;height:1.19px;background:#808080;"></div>
<div style="left:407.70px;top:320.49px;width:3.07px;height:1.19px;background:#808080;"></div>
<div style="left:413.53px;top:320.49px;width:4.82px;height:1.19px;background:#808080;"></div>
<div style="left:421.71px;top:320.49px;width:4.96px;height:1.19px;background:#808080;"></div>
<div style="left:429.42px;top:320.49px;width:5.77px;height:1.19px;background:#808080;"></div>
<div style="left:437.00px;top:320.49px;width:4.84px;height:1.19px;background:#808080;"></div>
<div style="left:444.63px;top:320.49px;width:2.08px;height:1.19px;background:#808080;"></div>
<div style="left:450.30px;top:320.49px;width:2.19px;height:1.19px;background:#808080;"></div>
<div style="left:454.90px;top:320.49px;width:3.27px;height:1.19px;background:#808080;"></div>
<div style="left:460.37px;top:320.49px;width:2.63px;height:1.19px;background:#808080;"></div>
<div style="left:464.98px;top:320.49px;width:5.34px;height:1.19px;background:#808080;"></div>
<div style="left:472.32px;top:320.49px;width:2.62px;height:1.19px;background:#808080;"></div>
<div style="left:476.93px;top:320.49px;width:5.59px;height:1.19px;background:#808080;"></div>
<div style="left:485.76px;top:320.49px;width:5.24px;height:1.19px;background:#808080;"></div>
<div style="left:495.39px;top:320.49px;width:3.94px;height:1.19px;background:#808080;"></div>
<div style="left:502.17px;top:320.49px;width:3.52px;height:1.19px;background:#808080;"></div>
<div style="left:508.19px;top:320.49px;width:4.34px;height:1.19px;background:#808080;"></div>
<div style="left:516.90px;top:320.49px;width:3.98px;height:1.19px;background:#808080;"></div>
<div style="left:524.68px;top:320.49px;width:5.51px;height:1.19px;background:#808080;"></div>
<div style="left:534.19px;top:320.49px;width:4.64px;height:1.19px;background:#808080;"></div>
<div style="left:457.13px;top:316.21px;width:44.59px;height:3.18px;background:#fbfbfb;border:0.5px solid #c8c8c8"></div>
<div style="left:372.41px;top:323.67px;width:163.99px;height:2.78px;background:#ffffff;"></div>
<div style="left:363.00px;top:323.67px;width:9.41px;height:2.78px;background:#e8e6dc;"></div>
<div style="left:374.89px;top:324.46px;width:1.37px;height:1.19px;background:#909090;"></div>
<div style="left:377.46px;top:324.46px;width:1.16px;height:1.19px;background:#909090;"></div>
<div style="left:380.73px;top:324.46px;width:1.56px;height:1.19px;background:#909090;"></div>
<div style="left:384.11px;top:324.46px;width:1.54px;height:1.19px;background:#909090;"></div>
<div style="left:387.05px;top:324.46px;width:1.72px;height:1.19px;background:#909090;"></div>
<div style="left:390.43px;top:324.46px;width:1.76px;height:1.19px;background:#909090;"></div>
<div style="left:393.97px;top:324.46px;width:1.82px;height:1.19px;background:#909090;"></div>
<div style="left:397.27px;top:324.46px;width:1.14px;height:1.19px;background:#909090;"></div>
<div style="left:399.51px;top:324.46px;width:1.71px;height:1.19px;background:#909090;"></div>
<div style="left:363.00px;top:326.45px;width:4.95px;height:123.64px;background:#f4f3ee;"></div>
<div style="left:367.46px;top:326.45px;width:4.46px;height:121.65px;background:#bcbca8;"></div>
<div style="left:372.41px;top:326.45px;width:163.99px;height:121.65px;background:#ffffff;"></div>
<div style="left:536.90px;top:323.67px;width:4.95px;height:124.44px;background:#d2d2c2;"></div>
<div style="left:541.85px;top:323.67px;width:36.66px;height:124.44px;background:#ffffff;"></div>
<div style="left:578.51px;top:302.00px;width:1.49px;height:163.00px;background:#b8b8b0;"></div>
<div style="left:365.28px;top:331.82px;width:1.49px;height:1.19px;background:#404040;"></div>
<div style="left:365.28px;top:341.76px;width:1.49px;height:1.19px;background:#404040;"></div>
<div style="left:365.28px;top:351.70px;width:1.49px;height:1.19px;background:#404040;"></div>
<div style="left:365.28px;top:361.63px;width:1.49px;height:1.19px;background:#404040;"></div>
<div style="left:365.28px;top:371.57px;width:1.49px;height:1.19px;background:#404040;"></div>
<div style="left:365.28px;top:381.51px;width:1.49px;height:1.19px;background:#404040;"></div>
<div style="left:365.28px;top:391.45px;width:1.49px;height:1.19px;background:#404040;"></div>
<div style="left:365.28px;top:401.39px;width:1.49px;height:1.19px;background:#404040;"></div>
<div style="left:365.28px;top:411.33px;width:1.49px;height:1.19px;background:#404040;"></div>
<div style="left:365.28px;top:421.27px;width:1.49px;height:1.19px;background:#404040;"></div>
<div style="left:365.28px;top:431.21px;width:1.49px;height:1.19px;background:#404040;"></div>
<div style="left:365.28px;top:441.15px;width:1.49px;height:1.19px;background:#404040;"></div>
<div style="left:544.33px;top:324.66px;width:3.19px;height:1.19px;background:#707070;"></div>
<div style="left:549.18px;top:324.66px;width:2.78px;height:1.19px;background:#707070;"></div>
<div style="left:554.09px;top:324.66px;width:3.13px;height:1.19px;background:#707070;"></div>
<div style="left:558.96px;top:324.66px;width:6.57px;height:1.19px;background:#707070;"></div>
<div style="left:567.05px;top:324.66px;width:6.78px;height:1.19px;background:#707070;"></div>
<div style="left:544.33px;top:328.34px;width:31.71px;height:3.48px;background:#ffffff;border:1px solid #a8a8a8"></div>
<div style="left:546.31px;top:329.63px;width:6.83px;height:0.99px;background:#606060;"></div>
<div style="left:554.17px;top:329.63px;width:5.58px;height:0.99px;background:#606060;"></div>
<div style="left:561.39px;top:329.63px;width:4.74px;height:0.99px;background:#606060;"></div>
<div style="left:544.33px;top:334.80px;width:3.96px;height:3.98px;background:#405070;"></div>
<div style="left:549.28px;top:335.79px;width:5.04px;height:1.19px;background:#c0c0c0;"></div>
<div style="left:556.54px;top:335.79px;width:4.24px;height:1.19px;background:#c0c0c0;"></div>
<div style="left:562.75px;top:335.79px;width:6.62px;height:1.19px;background:#c0c0c0;"></div>
<div style="left:544.33px;top:341.26px;width:6.51px;height:1.19px;background:#808080;"></div>
<div style="left:551.98px;top:341.26px;width:4.74px;height:1.19px;background:#808080;"></div>
<div style="left:558.36px;top:341.26px;width:6.73px;height:1.19px;background:#808080;"></div>
<div style="left:544.33px;top:345.73px;width:2.43px;height:1.19px;background:#a0a0a0;"></div>
<div style="left:549.07px;top:345.73px;width:2.72px;height:1.19px;background:#a0a0a0;"></div>
<div style="left:553.80px;top:345.73px;width:2.42px;height:1.19px;background:#a0a0a0;"></div>
<div style="left:544.33px;top:348.22px;width:31.71px;height:2.98px;background:#f0f0f0;border:1px solid #b0b0b0"></div>
<div style="left:544.33px;top:352.69px;width:6.77px;height:1.29px;background:#505050;"></div>
<div style="left:552.85px;top:352.69px;width:4.33px;height:1.29px;background:#505050;"></div>
<div style="left:558.87px;top:352.69px;width:2.30px;height:1.29px;background:#505050;"></div>
<div style="left:544.33px;top:355.17px;width:31.71px;height:2.98px;background:#f0f0f0;border:1px solid #b0b0b0"></div>
<div style="left:544.33px;top:427.73px;width:2.19px;height:1.19px;background:#404040;"></div>
<div style="left:548.31px;top:427.73px;width:2.08px;height:1.19px;background:#404040;"></div>
<div style="left:552.08px;top:427.73px;width:1.17px;height:1.19px;background:#404040;"></div>
<div style="left:547.30px;top:431.21px;width:4.86px;height:1.19px;background:#3040c0;"></div>
<div style="left:553.41px;top:431.21px;width:5.16px;height:1.19px;background:#3040c0;"></div>
<div style="left:560.87px;top:431.21px;width:2.19px;height:1.19px;background:#3040c0;"></div>
<div style="left:564.65px;top:431.21px;width:3.73px;height:1.19px;background:#3040c0;"></div>
<div style="left:569.74px;top:431.21px;width:1.34px;height:1.19px;background:#3040c0;"></div>
<div style="left:547.30px;top:435.18px;width:3.09px;height:1.19px;background:#3040c0;"></div>
<div style="left:552.68px;top:435.18px;width:6.67px;height:1.19px;background:#3040c0;"></div>
<div style="left:560.33px;top:435.18px;width:5.80px;height:1.19px;background:#3040c0;"></div>
<div style="left:547.30px;top:439.16px;width:3.51px;height:1.19px;background:#3040c0;"></div>
<div style="left:552.58px;top:439.16px;width:3.30px;height:1.19px;background:#3040c0;"></div>
<div style="left:557.99px;top:439.16px;width:4.30px;height:1.19px;background:#3040c0;"></div>
<div style="left:563.71px;top:439.16px;width:5.39px;height:1.19px;background:#3040c0;"></div>
<div style="left:388.76px;top:352.69px;width:8.92px;height:1.59px;background:#202020;"></div>
<div style="left:391.74px;top:355.67px;width:5.95px;height:1.39px;background:#303030;"></div>
<div style="left:389.75px;top:359.15px;width:7.93px;height:1.59px;background:#202020;"></div>
<div style="left:390.74px;top:362.13px;width:6.94px;height:1.39px;background:#303030;"></div>
<div style="left:389.75px;top:371.57px;width:7.93px;height:1.19px;background:#505050;"></div>
<div style="left:388.76px;top:378.53px;width:8.92px;height:1.39px;background:#404040;"></div>
<div style="left:388.76px;top:443.63px;width:19.82px;height:1.99px;background:#303030;"></div>
<div style="left:387.47px;top:384.49px;width:123.86px;height:53.67px;background:#ffffff;border:1px solid #5070b0"></div>
<div style="left:387.47px;top:384.49px;width:123.86px;height:2.19px;background:#3a6ad8;"></div>
<div style="left:388.47px;top:386.68px;width:9.91px;height:44.73px;background:#e8ecf4;"></div>
<div style="left:405.11px;top:432.20px;width:105.03px;height:3.98px;background:#101010;"></div>
<div style="left:414.53px;top:433.00px;width:29.73px;height:2.19px;background:#f0f0f0;"></div>
<div style="left:387.47px;top:437.67px;width:123.86px;height:1.19px;background:#3a60b8;"></div>
<div style="left:397.38px;top:323.57px;width:137.24px;height:106.35px;background:#2a54b8;"></div>
<div style="left:397.38px;top:323.57px;width:137.24px;height:4.62px;background:#1a5ae0;"></div>
<div style="left:401.96px;top:325.25px;width:6.75px;height:1.26px;background:#e8f0ff;"></div>
<div style="left:410.48px;top:325.25px;width:8.95px;height:1.26px;background:#e8f0ff;"></div>
<div style="left:422.71px;top:325.25px;width:6.10px;height:1.26px;background:#e8f0ff;"></div>
<div style="left:431.55px;top:325.25px;width:4.66px;height:1.26px;background:#e8f0ff;"></div>
<div style="left:438.04px;top:325.25px;width:5.08px;height:1.26px;background:#e8f0ff;"></div>
<div style="left:445.91px;top:325.25px;width:1.79px;height:1.26px;background:#e8f0ff;"></div>
<div style="left:525.47px;top:324.41px;width:3.66px;height:3.15px;background:#4a80f0;"></div>
<div style="left:530.04px;top:324.41px;width:3.66px;height:3.15px;background:#e06040;"></div>
<div style="left:398.30px;top:328.19px;width:135.41px;height:100.88px;background:#ece9d8;"></div>
<div style="left:398.30px;top:331.13px;width:135.41px;height:3.99px;background:#f4f2ea;"></div>
<div style="left:398.30px;top:335.34px;width:29.05px;height:90.79px;background:#ffffff;"></div>
<div style="left:406.53px;top:344.80px;width:12.12px;height:3.15px;background:#316ac5;"></div>
<div style="left:402.87px;top:336.18px;width:2.97px;height:2.52px;background:#5aa8e0;"></div>
<div style="left:406.99px;top:336.60px;width:12.58px;height:1.47px;background:#a8a8a8;"></div>
<div style="left:402.87px;top:339.33px;width:2.97px;height:2.52px;background:#5aa8e0;"></div>
<div style="left:406.99px;top:339.75px;width:12.58px;height:1.47px;background:#a8a8a8;"></div>
<div style="left:402.87px;top:342.27px;width:2.97px;height:2.52px;background:#5aa8e0;"></div>
<div style="left:406.99px;top:342.69px;width:12.58px;height:1.47px;background:#a8a8a8;"></div>
<div style="left:402.87px;top:345.43px;width:2.97px;height:2.52px;background:#5aa8e0;"></div>
<div style="left:399.44px;top:415.62px;width:2.97px;height:2.52px;background:#5aa8e0;"></div>
<div style="left:403.56px;top:416.04px;width:9.15px;height:1.47px;background:#a8a8a8;"></div>
<div style="left:399.44px;top:419.20px;width:2.97px;height:2.52px;background:#5aa8e0;"></div>
<div style="left:403.56px;top:419.62px;width:9.15px;height:1.47px;background:#a8a8a8;"></div>
<div style="left:399.44px;top:422.77px;width:2.97px;height:2.52px;background:#5aa8e0;"></div>
<div style="left:403.56px;top:423.19px;width:9.15px;height:1.47px;background:#a8a8a8;"></div>
<div style="left:401.96px;top:329.03px;width:2.29px;height:1.47px;background:#909090;"></div>
<div style="left:406.53px;top:329.03px;width:3.20px;height:1.47px;background:#909090;"></div>
<div style="left:405.16px;top:332.39px;width:11.44px;height:1.47px;background:#909090;"></div>
<div style="left:428.26px;top:332.39px;width:3.66px;height:1.47px;background:#909090;"></div>
<div style="left:428.49px;top:338.28px;width:104.76px;height:87.43px;background:#fbfbf9;"></div>
<div style="left:428.49px;top:335.34px;width:15.55px;height:3.36px;background:#fcfcfe;"></div>
<div style="left:428.95px;top:338.91px;width:104.07px;height:5.88px;background:#efede2;"></div>
<div style="left:432.61px;top:341.01px;width:4.57px;height:1.47px;background:#909090;"></div>
<div style="left:438.10px;top:339.33px;width:9.15px;height:5.04px;background:#ffffff;"></div>
<div style="left:449.99px;top:341.01px;width:17.15px;height:1.47px;background:#909090;"></div>
<div style="left:475.38px;top:339.75px;width:22.87px;height:2.52px;background:#f8f8f8;"></div>
<div style="left:501.22px;top:341.01px;width:3.43px;height:1.47px;background:#909090;"></div>
<div style="left:429.18px;top:345.64px;width:50.09px;height:2.94px;background:#07098e;"></div>
<div style="left:429.86px;top:346.06px;width:5.95px;height:2.10px;background:#eeeef4;"></div>
<div style="left:436.50px;top:346.06px;width:13.04px;height:2.10px;background:#eeeef4;"></div>
<div style="left:429.18px;top:348.58px;width:50.09px;height:34.47px;background:#f0efe8;"></div>
<div style="left:429.18px;top:348.83px;width:50.09px;height:0.84px;background:linear-gradient(90deg,#3a6cd0,#6a98e0 30%,#98bcec 60%,#b0ccf0);"></div>
<div style="left:429.18px;top:349.67px;width:50.09px;height:3.47px;background:#f1f0ea;"></div>
<div style="left:431.35px;top:353.16px;width:37.85px;height:0.60px;background:#ffffff;"></div>
<div style="left:429.18px;top:353.16px;width:2.17px;height:0.60px;background:#e8e6dc;"></div>
<div style="left:429.18px;top:353.75px;width:1.14px;height:26.15px;background:#f4f3ee;"></div>
<div style="left:430.21px;top:353.75px;width:1.03px;height:25.73px;background:#bcbca8;"></div>
<div style="left:431.35px;top:353.75px;width:37.85px;height:25.73px;background:#ffffff;"></div>
<div style="left:469.32px;top:353.16px;width:1.14px;height:26.31px;background:#d2d2c2;"></div>
<div style="left:470.46px;top:353.16px;width:8.46px;height:26.31px;background:#ffffff;"></div>
<div style="left:478.92px;top:348.58px;width:0.60px;height:34.47px;background:#b8b8b0;"></div>
<div style="left:434.83px;top:366.02px;width:28.59px;height:11.35px;background:#ffffff;border:1px solid #5070b0"></div>
<div style="left:434.83px;top:366.02px;width:28.59px;height:0.60px;background:#3a6ad8;"></div>
<div style="left:435.05px;top:366.49px;width:2.29px;height:9.46px;background:#e8ecf4;"></div>
<div style="left:438.90px;top:376.11px;width:24.24px;height:0.84px;background:#101010;"></div>
<div style="left:441.07px;top:376.28px;width:6.86px;height:0.60px;background:#f0f0f0;"></div>
<div style="left:434.83px;top:377.27px;width:28.59px;height:0.60px;background:#3a60b8;"></div>
<div style="left:437.18px;top:353.20px;width:31.79px;height:22.59px;background:#2a54b8;"></div>
<div style="left:437.18px;top:353.20px;width:31.79px;height:0.98px;background:#1a5ae0;"></div>
<div style="left:437.39px;top:354.18px;width:31.37px;height:21.43px;background:#ece9d8;"></div>
<div style="left:437.39px;top:354.81px;width:31.37px;height:0.85px;background:#f4f2ea;"></div>
<div style="left:437.39px;top:355.70px;width:6.73px;height:19.29px;background:#ffffff;"></div>
<div style="left:439.30px;top:357.71px;width:2.81px;height:0.67px;background:#316ac5;"></div>
<div style="left:444.39px;top:356.33px;width:24.27px;height:18.57px;background:#fbfbf9;"></div>
<div style="left:444.39px;top:355.70px;width:3.60px;height:0.71px;background:#fcfcfe;"></div>
<div style="left:444.49px;top:356.46px;width:24.11px;height:1.25px;background:#efede2;"></div>
<div style="left:444.55px;top:357.89px;width:11.60px;height:0.63px;background:#07098e;"></div>
<div style="left:444.55px;top:358.52px;width:11.60px;height:7.32px;background:#f4f4f4;"></div>
<div style="left:456.42px;top:357.89px;width:11.50px;height:0.63px;background:#07098e;"></div>
<div style="left:456.42px;top:358.52px;width:11.50px;height:7.32px;background:#101010;"></div>
<div style="left:444.55px;top:366.06px;width:11.60px;height:0.63px;background:#07098e;"></div>
<div style="left:444.55px;top:366.69px;width:11.60px;height:7.32px;background:#3467a8;"></div>
<div style="left:456.42px;top:366.06px;width:11.50px;height:0.63px;background:#07098e;"></div>
<div style="left:456.42px;top:366.69px;width:11.50px;height:7.32px;background:#f4f4f4;"></div>
<div style="left:437.39px;top:374.99px;width:31.37px;height:0.63px;background:#ece9d8;"></div>
<div style="left:441.37px;top:375.13px;width:26.81px;height:0.60px;background:#fbfaf6;"></div>
<div style="left:429.18px;top:379.47px;width:50.09px;height:1.89px;background:#ecebe2;"></div>
<div style="left:429.18px;top:381.68px;width:50.09px;height:1.37px;background:linear-gradient(#3a78f0,#2458d8 40%,#1e50c8);"></div>
<div style="left:429.18px;top:381.68px;width:3.66px;height:1.37px;background:linear-gradient(#50b850,#2e8a2e);"></div>
<div style="left:480.41px;top:345.64px;width:49.63px;height:2.94px;background:#07098e;"></div>
<div style="left:481.10px;top:346.06px;width:5.95px;height:2.10px;background:#eeeef4;"></div>
<div style="left:487.73px;top:346.06px;width:13.04px;height:2.10px;background:#eeeef4;"></div>
<div style="left:480.41px;top:348.58px;width:49.63px;height:34.47px;background:#3467a8;"></div>
<div style="left:482.13px;top:348.58px;width:47.92px;height:32.58px;background:#000000;"></div>
<div style="left:482.13px;top:348.89px;width:47.92px;height:0.95px;background:#d4d4d4;"></div>
<div style="left:528.90px;top:349.84px;width:1.14px;height:31.32px;background:#e0e0e0;"></div>
<div style="left:482.13px;top:380.63px;width:46.77px;height:0.60px;background:#303030;"></div>
<div style="left:482.01px;top:351.42px;width:46.66px;height:27.64px;background:#000000;"></div>
<div style="left:482.01px;top:351.52px;width:46.66px;height:0.84px;background:linear-gradient(90deg,#2a58c0,#5080d0 40%,#a0bce8 80%,#b8d0f0);"></div>
<div style="left:527.64px;top:352.36px;width:1.03px;height:25.54px;background:#e4e4e4;"></div>
<div style="left:482.01px;top:377.90px;width:46.66px;height:1.16px;background:#e4e4e4;"></div>
<div style="left:480.41px;top:381.05px;width:49.63px;height:2.00px;background:#d4d0c8;"></div>
<div style="left:480.41px;top:381.05px;width:49.63px;height:0.60px;background:#f8f8f8;"></div>
<div style="left:429.18px;top:384.10px;width:50.09px;height:2.94px;background:#07098e;"></div>
<div style="left:429.86px;top:384.52px;width:5.95px;height:2.10px;background:#eeeef4;"></div>
<div style="left:436.50px;top:384.52px;width:13.04px;height:2.10px;background:#eeeef4;"></div>
<div style="left:429.18px;top:387.04px;width:50.09px;height:34.47px;background:#3467a8;"></div>
<div style="left:430.32px;top:387.67px;width:1.60px;height:1.26px;background:#a8c0d8;"></div>
<div style="left:430.32px;top:391.03px;width:1.60px;height:1.26px;background:#a8c0d8;"></div>
<div style="left:430.32px;top:394.40px;width:1.60px;height:1.26px;background:#a8c0d8;"></div>
<div style="left:430.32px;top:397.76px;width:1.60px;height:1.26px;background:#a8c0d8;"></div>
<div style="left:430.32px;top:401.12px;width:1.60px;height:1.26px;background:#a8c0d8;"></div>
<div style="left:430.32px;top:404.48px;width:1.60px;height:1.26px;background:#a8c0d8;"></div>
<div style="left:430.32px;top:407.85px;width:1.60px;height:1.26px;background:#a8c0d8;"></div>
<div style="left:430.32px;top:411.21px;width:1.60px;height:1.26px;background:#a8c0d8;"></div>
<div style="left:430.32px;top:414.57px;width:1.60px;height:1.26px;background:#a8c0d8;"></div>
<div style="left:433.98px;top:387.67px;width:1.60px;height:1.26px;background:#a8c0d8;"></div>
<div style="left:433.98px;top:391.03px;width:1.60px;height:1.26px;background:#a8c0d8;"></div>
<div style="left:433.98px;top:394.40px;width:1.60px;height:1.26px;background:#a8c0d8;"></div>
<div style="left:433.98px;top:397.76px;width:1.60px;height:1.26px;background:#a8c0d8;"></div>
<div style="left:433.98px;top:401.12px;width:1.60px;height:1.26px;background:#a8c0d8;"></div>
<div style="left:433.98px;top:404.48px;width:1.60px;height:1.26px;background:#a8c0d8;"></div>
<div style="left:433.98px;top:407.85px;width:1.60px;height:1.26px;background:#a8c0d8;"></div>
<div style="left:433.98px;top:411.21px;width:1.60px;height:1.26px;background:#a8c0d8;"></div>
<div style="left:433.98px;top:414.57px;width:1.60px;height:1.26px;background:#a8c0d8;"></div>
<div style="left:437.64px;top:387.67px;width:1.60px;height:1.26px;background:#a8c0d8;"></div>
<div style="left:437.64px;top:391.03px;width:1.60px;height:1.26px;background:#a8c0d8;"></div>
<div style="left:437.64px;top:394.40px;width:1.60px;height:1.26px;background:#a8c0d8;"></div>
<div style="left:437.64px;top:397.76px;width:1.60px;height:1.26px;background:#a8c0d8;"></div>
<div style="left:437.64px;top:401.12px;width:1.60px;height:1.26px;background:#a8c0d8;"></div>
<div style="left:437.64px;top:404.48px;width:1.60px;height:1.26px;background:#a8c0d8;"></div>
<div style="left:437.64px;top:407.85px;width:1.60px;height:1.26px;background:#a8c0d8;"></div>
<div style="left:437.64px;top:411.21px;width:1.60px;height:1.26px;background:#a8c0d8;"></div>
<div style="left:429.18px;top:420.04px;width:50.09px;height:1.47px;background:#d4d0c8;"></div>
<div style="left:480.41px;top:384.10px;width:49.63px;height:2.94px;background:#07098e;"></div>
<div style="left:481.10px;top:384.52px;width:5.95px;height:2.10px;background:#eeeef4;"></div>
<div style="left:487.73px;top:384.52px;width:13.04px;height:2.10px;background:#eeeef4;"></div>
<div style="left:480.41px;top:387.04px;width:49.63px;height:34.47px;background:#f0efe8;"></div>
<div style="left:480.41px;top:387.29px;width:49.63px;height:0.84px;background:linear-gradient(90deg,#3a6cd0,#6a98e0 30%,#98bcec 60%,#b0ccf0);"></div>
<div style="left:480.41px;top:388.13px;width:49.63px;height:3.47px;background:#f1f0ea;"></div>
<div style="left:482.56px;top:391.62px;width:37.51px;height:0.60px;background:#ffffff;"></div>
<div style="left:480.41px;top:391.62px;width:2.15px;height:0.60px;background:#e8e6dc;"></div>
<div style="left:480.41px;top:392.21px;width:1.13px;height:26.15px;background:#f4f3ee;"></div>
<div style="left:481.43px;top:392.21px;width:1.02px;height:25.73px;background:#bcbca8;"></div>
<div style="left:482.56px;top:392.21px;width:37.51px;height:25.73px;background:#ffffff;"></div>
<div style="left:520.19px;top:391.62px;width:1.13px;height:26.31px;background:#d2d2c2;"></div>
<div style="left:521.32px;top:391.62px;width:8.39px;height:26.31px;background:#ffffff;"></div>
<div style="left:529.70px;top:387.04px;width:0.60px;height:34.47px;background:#b8b8b0;"></div>
<div style="left:486.01px;top:404.48px;width:28.33px;height:11.35px;background:#ffffff;border:1px solid #5070b0"></div>
<div style="left:486.01px;top:404.48px;width:28.33px;height:0.60px;background:#3a6ad8;"></div>
<div style="left:486.23px;top:404.95px;width:2.27px;height:9.46px;background:#e8ecf4;"></div>
<div style="left:490.04px;top:414.57px;width:24.02px;height:0.84px;background:#101010;"></div>
<div style="left:492.20px;top:414.74px;width:6.80px;height:0.60px;background:#f0f0f0;"></div>
<div style="left:486.01px;top:415.73px;width:28.33px;height:0.60px;background:#3a60b8;"></div>
<div style="left:488.34px;top:391.66px;width:31.50px;height:22.59px;background:#2a54b8;"></div>
<div style="left:488.34px;top:391.66px;width:31.50px;height:0.98px;background:#1a5ae0;"></div>
<div style="left:488.55px;top:392.65px;width:31.08px;height:21.43px;background:#ece9d8;"></div>
<div style="left:488.55px;top:393.27px;width:31.08px;height:0.85px;background:#f4f2ea;"></div>
<div style="left:488.55px;top:394.16px;width:6.67px;height:19.29px;background:#ffffff;"></div>
<div style="left:490.44px;top:396.17px;width:2.78px;height:0.67px;background:#316ac5;"></div>
<div style="left:495.48px;top:394.79px;width:24.05px;height:18.57px;background:#fbfbf9;"></div>
<div style="left:495.48px;top:394.16px;width:3.57px;height:0.71px;background:#fcfcfe;"></div>
<div style="left:495.59px;top:394.92px;width:23.89px;height:1.25px;background:#efede2;"></div>
<div style="left:495.64px;top:396.35px;width:11.50px;height:0.63px;background:#07098e;"></div>
<div style="left:495.64px;top:396.98px;width:11.50px;height:7.32px;background:#f4f4f4;"></div>
<div style="left:507.40px;top:396.35px;width:11.39px;height:0.63px;background:#07098e;"></div>
<div style="left:507.40px;top:396.98px;width:11.39px;height:7.32px;background:#101010;"></div>
<div style="left:495.64px;top:404.52px;width:11.50px;height:0.63px;background:#07098e;"></div>
<div style="left:495.64px;top:405.15px;width:11.50px;height:7.32px;background:#3467a8;"></div>
<div style="left:507.40px;top:404.52px;width:11.39px;height:0.63px;background:#07098e;"></div>
<div style="left:507.40px;top:405.15px;width:11.39px;height:7.32px;background:#f4f4f4;"></div>
<div style="left:488.55px;top:413.45px;width:31.08px;height:0.63px;background:#ece9d8;"></div>
<div style="left:492.49px;top:413.59px;width:26.57px;height:0.60px;background:#fbfaf6;"></div>
<div style="left:480.41px;top:417.94px;width:49.63px;height:1.89px;background:#ecebe2;"></div>
<div style="left:480.41px;top:420.14px;width:49.63px;height:1.37px;background:linear-gradient(#3a78f0,#2458d8 40%,#1e50c8);"></div>
<div style="left:480.41px;top:420.14px;width:3.63px;height:1.37px;background:linear-gradient(#50b850,#2e8a2e);"></div>
<div style="left:398.30px;top:426.13px;width:135.41px;height:2.94px;background:#ece9d8;"></div>
<div style="left:415.45px;top:426.76px;width:115.73px;height:2.31px;background:#fbfaf6;"></div>
<div style="left:363.00px;top:448.10px;width:217.00px;height:8.95px;background:#ecebe2;"></div>
<div style="left:363.99px;top:451.58px;width:2.71px;height:2.48px;background:#606060;"></div>
<div style="left:368.88px;top:451.58px;width:3.49px;height:2.48px;background:#606060;"></div>
<div style="left:374.14px;top:451.58px;width:2.28px;height:2.48px;background:#606060;"></div>
<div style="left:378.84px;top:451.58px;width:2.69px;height:2.48px;background:#606060;"></div>
<div style="left:383.36px;top:451.58px;width:2.49px;height:2.48px;background:#606060;"></div>
<div style="left:387.63px;top:451.58px;width:1.90px;height:2.48px;background:#606060;"></div>
<div style="left:391.85px;top:451.58px;width:3.70px;height:2.48px;background:#606060;"></div>
<div style="left:397.97px;top:451.58px;width:3.06px;height:2.48px;background:#606060;"></div>
<div style="left:402.82px;top:451.58px;width:2.56px;height:2.48px;background:#606060;"></div>
<div style="left:406.82px;top:451.58px;width:3.29px;height:2.48px;background:#606060;"></div>
<div style="left:411.83px;top:451.58px;width:2.21px;height:2.48px;background:#606060;"></div>
<div style="left:416.98px;top:451.58px;width:2.33px;height:2.48px;background:#606060;"></div>
<div style="left:422.24px;top:451.58px;width:3.02px;height:2.48px;background:#606060;"></div>
<div style="left:427.81px;top:451.58px;width:3.04px;height:2.48px;background:#606060;"></div>
<div style="left:432.36px;top:451.58px;width:3.25px;height:2.48px;background:#606060;"></div>
<div style="left:437.26px;top:451.58px;width:2.50px;height:2.48px;background:#606060;"></div>
<div style="left:441.18px;top:451.58px;width:1.63px;height:2.48px;background:#606060;"></div>
<div style="left:444.65px;top:451.58px;width:1.52px;height:2.48px;background:#606060;"></div>
<div style="left:448.05px;top:451.58px;width:3.59px;height:2.48px;background:#606060;"></div>
<div style="left:454.61px;top:451.58px;width:2.53px;height:2.48px;background:#606060;"></div>
<div style="left:458.53px;top:451.58px;width:2.34px;height:2.48px;background:#606060;"></div>
<div style="left:462.18px;top:451.58px;width:2.03px;height:2.48px;background:#606060;"></div>
<div style="left:466.50px;top:451.58px;width:3.01px;height:2.48px;background:#606060;"></div>
<div style="left:470.76px;top:451.58px;width:2.69px;height:2.48px;background:#606060;"></div>
<div style="left:475.39px;top:451.58px;width:2.47px;height:2.48px;background:#606060;"></div>
<div style="left:479.30px;top:451.58px;width:2.46px;height:2.48px;background:#606060;"></div>
<div style="left:483.13px;top:451.58px;width:3.19px;height:2.48px;background:#606060;"></div>
<div style="left:488.66px;top:451.58px;width:3.04px;height:2.48px;background:#606060;"></div>
<div style="left:493.62px;top:451.58px;width:3.86px;height:2.48px;background:#606060;"></div>
<div style="left:499.32px;top:451.58px;width:1.99px;height:2.48px;background:#606060;"></div>
<div style="left:503.17px;top:451.58px;width:3.75px;height:2.48px;background:#606060;"></div>
<div style="left:508.39px;top:451.58px;width:3.38px;height:2.48px;background:#606060;"></div>
<div style="left:514.63px;top:451.58px;width:3.60px;height:2.48px;background:#606060;"></div>
<div style="left:520.24px;top:451.58px;width:1.29px;height:2.48px;background:#606060;"></div>
<div style="left:363.00px;top:458.54px;width:217.00px;height:6.46px;background:linear-gradient(#3a78f0,#2458d8 40%,#1e50c8);"></div>
<div style="left:363.00px;top:458.54px;width:15.85px;height:6.46px;background:linear-gradient(#50b850,#2e8a2e);"></div>
<div style="left:367.95px;top:461.02px;width:3.96px;height:1.49px;background:#ffffff;"></div>
<div style="left:382.82px;top:460.53px;width:2.97px;height:2.98px;background:#c0d8ff;"></div>
<div style="left:390.74px;top:460.53px;width:2.97px;height:2.98px;background:#c0d8ff;"></div>
<div style="left:398.67px;top:460.53px;width:2.97px;height:2.98px;background:#c0d8ff;"></div>
<div style="left:407.59px;top:460.03px;width:24.77px;height:3.98px;background:#4a80ec;"></div>
<div style="left:409.57px;top:461.52px;width:3.33px;height:1.19px;background:#d0e0ff;"></div>
<div style="left:414.55px;top:461.52px;width:2.39px;height:1.19px;background:#d0e0ff;"></div>
<div style="left:418.37px;top:461.52px;width:2.34px;height:1.19px;background:#d0e0ff;"></div>
<div style="left:421.68px;top:461.52px;width:3.39px;height:1.19px;background:#d0e0ff;"></div>
<div style="left:426.18px;top:461.52px;width:1.22px;height:1.19px;background:#d0e0ff;"></div>
<div style="left:434.34px;top:460.03px;width:24.77px;height:3.98px;background:#4a80ec;"></div>
<div style="left:436.32px;top:461.52px;width:2.35px;height:1.19px;background:#d0e0ff;"></div>
<div style="left:440.47px;top:461.52px;width:6.88px;height:1.19px;background:#d0e0ff;"></div>
<div style="left:448.79px;top:461.52px;width:4.68px;height:1.19px;background:#d0e0ff;"></div>
<div style="left:461.10px;top:460.03px;width:24.77px;height:3.98px;background:#4a80ec;"></div>
<div style="left:463.08px;top:461.52px;width:3.98px;height:1.19px;background:#d0e0ff;"></div>
<div style="left:468.30px;top:461.52px;width:2.87px;height:1.19px;background:#d0e0ff;"></div>
<div style="left:472.47px;top:461.52px;width:5.75px;height:1.19px;background:#d0e0ff;"></div>
<div style="left:479.53px;top:461.52px;width:1.39px;height:1.19px;background:#d0e0ff;"></div>
<div style="left:487.85px;top:460.03px;width:24.77px;height:3.98px;background:#4a80ec;"></div>
<div style="left:489.83px;top:461.52px;width:4.82px;height:1.19px;background:#d0e0ff;"></div>
<div style="left:496.43px;top:461.52px;width:4.24px;height:1.19px;background:#d0e0ff;"></div>
<div style="left:502.54px;top:461.52px;width:4.32px;height:1.19px;background:#d0e0ff;"></div>
<div style="left:514.60px;top:460.03px;width:24.77px;height:3.98px;background:#4a80ec;"></div>
<div style="left:516.58px;top:461.52px;width:6.90px;height:1.19px;background:#d0e0ff;"></div>
<div style="left:524.55px;top:461.52px;width:3.27px;height:1.19px;background:#d0e0ff;"></div>
<div style="left:529.98px;top:461.52px;width:4.44px;height:1.19px;background:#d0e0ff;"></div>
<div style="left:541.36px;top:460.03px;width:24.77px;height:3.98px;background:#4a80ec;"></div>
<div style="left:543.34px;top:461.52px;width:2.70px;height:1.19px;background:#d0e0ff;"></div>
<div style="left:547.95px;top:461.52px;width:5.05px;height:1.19px;background:#d0e0ff;"></div>
<div style="left:554.12px;top:461.52px;width:4.49px;height:1.19px;background:#d0e0ff;"></div>
<div style="left:559.91px;top:461.52px;width:1.26px;height:1.19px;background:#d0e0ff;"></div>
<div style="left:566.13px;top:458.54px;width:13.87px;height:6.46px;background:#1890e8;"></div>
</div>
</body></html>
